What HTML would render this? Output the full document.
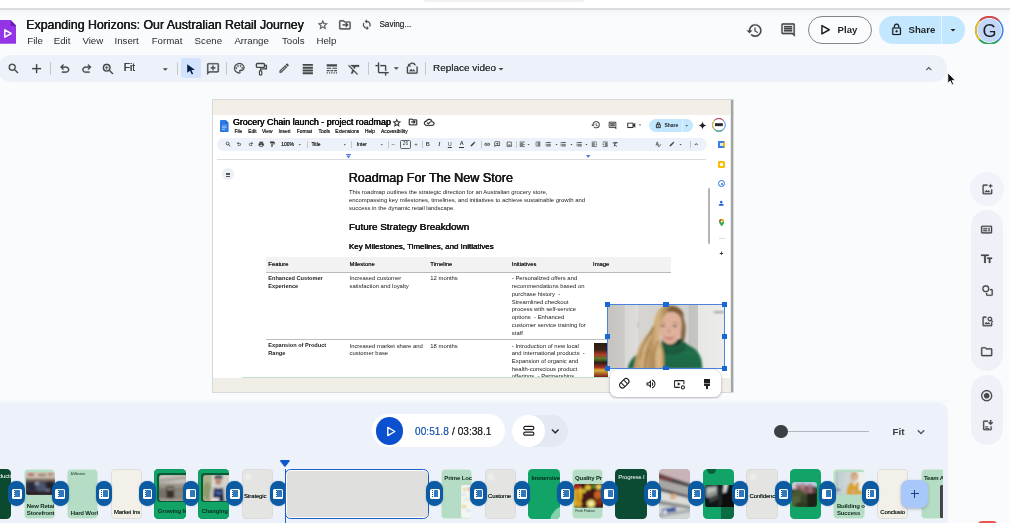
<!DOCTYPE html>
<html lang="en"><head><meta charset="utf-8"><title>Expanding Horizons: Our Australian Retail Journey</title>
<style>
html,body{margin:0;padding:0;}
body{width:1010px;height:523px;overflow:hidden;position:relative;background:#f9fbfd;font-family:"Liberation Sans",sans-serif;}
.t{position:absolute;white-space:nowrap;}
div,svg,span{box-sizing:border-box;}
#w{position:absolute;left:0;top:0;width:1010px;height:523px;will-change:transform;}
</style></head><body><div id="w">
<div style="position:absolute;left:0.00px;top:0.00px;width:1010.00px;height:8.00px;background:#fff;"></div>
<div style="position:absolute;left:423.00px;top:-6.00px;width:162.00px;height:8.00px;background:#f2f2f2;border-radius:4px;"></div>
<div style="position:absolute;left:0.00px;top:8.00px;width:1010.00px;height:1.50px;background:#dcdcdc;"></div>
<div style="position:absolute;left:0.00px;top:9.50px;width:1010.00px;height:6.00px;background:linear-gradient(#f3f4f6,#f9fbfd);"></div>
<svg style="position:absolute;left:-0.500px;top:20.200px" width="16.600" height="23.800" viewBox="0 0 16.600 23.800"><path d="M0 0h10.600l6 6v15.800a2 2 0 0 1-2 2H0z" fill="#9334e6"/><path d="M10.600 0l6 6h-5a1 1 0 0 1-1-1z" fill="#6a1bb8"/><path d="M4.800 9.800v7.400l6.300-3.700z" fill="none" stroke="#fff" stroke-width="1.500" stroke-linejoin="round"/></svg>
<span class="t" style="left:26.30px;top:19.35px;font-size:12.34px;line-height:12.34px;font-weight:400;color:#1f1f1f;text-shadow:0.2px 0 0 #1f1f1f,-0.2px 0 0 #1f1f1f;">Expanding Horizons: Our Australian Retail Journey</span>
<span class="t" style="left:27.30px;top:35.99px;font-size:9.7px;line-height:9.7px;font-weight:400;color:#2d2d2d;">File</span>
<span class="t" style="left:53.70px;top:35.99px;font-size:9.7px;line-height:9.7px;font-weight:400;color:#2d2d2d;">Edit</span>
<span class="t" style="left:82.40px;top:35.99px;font-size:9.7px;line-height:9.7px;font-weight:400;color:#2d2d2d;">View</span>
<span class="t" style="left:114.50px;top:35.99px;font-size:9.7px;line-height:9.7px;font-weight:400;color:#2d2d2d;">Insert</span>
<span class="t" style="left:151.70px;top:35.99px;font-size:9.7px;line-height:9.7px;font-weight:400;color:#2d2d2d;">Format</span>
<span class="t" style="left:194.60px;top:35.99px;font-size:9.7px;line-height:9.7px;font-weight:400;color:#2d2d2d;">Scene</span>
<span class="t" style="left:234.40px;top:35.99px;font-size:9.7px;line-height:9.7px;font-weight:400;color:#2d2d2d;">Arrange</span>
<span class="t" style="left:282.00px;top:35.99px;font-size:9.7px;line-height:9.7px;font-weight:400;color:#2d2d2d;">Tools</span>
<span class="t" style="left:316.40px;top:35.99px;font-size:9.7px;line-height:9.7px;font-weight:400;color:#2d2d2d;">Help</span>
<svg style="position:absolute;left:317.20px;top:19.10px;color:#444746;overflow:visible;" width="11.6" height="11.6" viewBox="0 0 24 24" fill="currentColor" stroke="currentColor" stroke-width="0.5" stroke-linejoin="round"><path d="M22 9.240l-7.190-.620L12 2 9.190 8.630 2 9.240l5.460 4.730L5.820 21 12 17.270 18.180 21l-1.630-7.030L22 9.240zM12 15.400l-3.760 2.270 1-4.280-3.320-2.880 4.380-.380L12 6.100l1.710 4.040 4.380.380-3.320 2.880 1 4.280L12 15.400z"/></svg>
<svg style="position:absolute;left:338.20px;top:17.90px;color:#444746;overflow:visible;" width="13.8" height="13.8" viewBox="0 0 24 24" fill="currentColor" stroke="currentColor" stroke-width="0.4" stroke-linejoin="round"><path d="M20 6h-8l-2-2H4c-1.100 0-2 .9-2 2v12c0 1.100.9 2 2 2h16c1.100 0 2-.9 2-2V8c0-1.100-.9-2-2-2zm0 12H4V6h5.170l2 2H20v10zm-7.160-3.590L14.250 16l4-4-4-4-1.410 1.410L14.420 11H8v2h6.420l-1.580 1.410z"/></svg>
<svg style="position:absolute;left:361.25px;top:19.25px;color:#444746;overflow:visible;" width="11.5" height="11.5" viewBox="0 0 24 24" fill="currentColor" stroke="currentColor" stroke-width="0.5" stroke-linejoin="round"><path d="M12 4V1L8 5l4 4V6c3.310 0 6 2.690 6 6 0 1.010-.250 1.970-.7 2.800l1.460 1.460A7.930 7.930 0 0 0 20 12c0-4.420-3.580-8-8-8zm0 14c-3.310 0-6-2.690-6-6 0-1.010.250-1.970.7-2.800L5.240 7.740A7.930 7.930 0 0 0 4 12c0 4.420 3.580 8 8 8v3l4-4-4-4v3z"/></svg>
<span class="t" style="left:379.40px;top:20.96px;font-size:8.2px;line-height:8.2px;font-weight:400;color:#3a3c3b;text-shadow:0 0 .3px #3a3c3b;">Saving...</span>
<svg style="position:absolute;left:745.50px;top:21.50px;color:#444746;overflow:visible;" width="17" height="17" viewBox="0 0 24 24" fill="currentColor" stroke="currentColor" stroke-width="0.3" stroke-linejoin="round"><path d="M13 3a9 9 0 0 0-9 9H1l3.890 3.890.070.140L9 12H6c0-3.870 3.130-7 7-7s7 3.130 7 7-3.130 7-7 7c-1.930 0-3.680-.790-4.940-2.060l-1.420 1.420A8.954 8.954 0 0 0 13 21a9 9 0 0 0 0-18zm-1 5v5l4.280 2.540.720-1.210-3.500-2.080V8H12z"/></svg>
<svg style="position:absolute;left:780.40px;top:22.40px;color:#444746;overflow:visible;" width="16.2" height="16.2" viewBox="0 0 24 24" fill="currentColor" stroke="currentColor" stroke-width="0.3" stroke-linejoin="round"><path d="M21.990 4c0-1.100-.890-2-1.990-2H4c-1.100 0-2 .9-2 2v12c0 1.100.9 2 2 2h14l4 4-.010-18zM20 4v13.170L18.830 16H4V4h16zM6 12h12v2H6zm0-3h12v2H6zm0-3h12v2H6z"/></svg>
<div style="position:absolute;left:807.60px;top:16.00px;width:64.60px;height:28.00px;border:1px solid #80868b;border-radius:14px;background:#fbfcfe;"></div>
<svg style="position:absolute;left:817.95px;top:23.35px;color:#1f1f1f;overflow:visible;" width="13.5" height="13.5" viewBox="0 0 24 24" fill="currentColor"><path d="M7 4.500v15l13-7.500z" fill="none" stroke="currentColor" stroke-width="2.600" stroke-linejoin="round"/></svg>
<span class="t" style="left:837.60px;top:25.47px;font-size:9.6px;line-height:9.6px;font-weight:700;color:#1f1f1f;">Play</span>
<div style="position:absolute;left:878.90px;top:16.00px;width:86.00px;height:28.00px;border-radius:14px;background:#c2e7ff;"></div>
<div style="position:absolute;left:941.00px;top:16.00px;width:1.00px;height:28.00px;background:#e4f3ff;"></div>
<svg style="position:absolute;left:889.90px;top:23.00px;color:#1f1f1f;overflow:visible;" width="13.2" height="13.2" viewBox="0 0 24 24" fill="currentColor" stroke="currentColor" stroke-width="0.3" stroke-linejoin="round"><path d="M18 8h-1V6c0-2.760-2.240-5-5-5S7 3.240 7 6v2H6c-1.100 0-2 .9-2 2v10c0 1.100.9 2 2 2h12c1.100 0 2-.9 2-2V10c0-1.100-.9-2-2-2zM9 6c0-1.660 1.340-3 3-3s3 1.340 3 3v2H9V6zm9 14H6V10h12v10zm-6-3c1.100 0 2-.9 2-2s-.9-2-2-2-2 .9-2 2 .9 2 2 2z"/></svg>
<span class="t" style="left:908.60px;top:25.47px;font-size:9.6px;line-height:9.6px;font-weight:700;color:#1f1f1f;">Share</span>
<svg style="position:absolute;left:946.60px;top:24.30px;color:#1f1f1f;overflow:visible;" width="12" height="12" viewBox="0 0 24 24" fill="currentColor"><path d="M7 10l5 5 5-5z"/></svg>
<svg style="position:absolute;left:975.4px;top:15.8px" width="28.600" height="28.600" viewBox="0 0 28 28"><circle cx="14" cy="14" r="13.200" fill="none" stroke="#4285f4" stroke-width="1.600"/><path d="M4.670 4.670A13.200 13.200 0 0 1 23.330 4.670" fill="none" stroke="#ea4335" stroke-width="1.600"/><path d="M4.670 4.670A13.200 13.200 0 0 0 4.670 23.330" fill="none" stroke="#fbbc04" stroke-width="1.600"/><path d="M4.670 23.330A13.200 13.200 0 0 0 23.330 23.330" fill="none" stroke="#34a853" stroke-width="1.600"/><circle cx="14" cy="14" r="11.600" fill="#c3d7f8"/><text x="14.200" y="20.300" text-anchor="middle" font-family="Liberation Sans, sans-serif" font-size="17.600" fill="#1f1f1f">G</text></svg>
<div style="position:absolute;left:-2.00px;top:55.00px;width:949.00px;height:26.50px;background:#edf2fa;border-radius:13px;"></div>
<svg style="position:absolute;left:7.00px;top:62.00px;color:#444746;overflow:visible;" width="13.2" height="13.2" viewBox="0 0 24 24" fill="currentColor" stroke="currentColor" stroke-width="0.6" stroke-linejoin="round"><path d="M15.5 14h-.79l-.28-.27A6.47 6.47 0 0 0 16 9.5 6.5 6.5 0 1 0 9.5 16c1.61 0 3.09-.59 4.23-1.57l.27.28v.79l5 4.99L20.49 19l-4.99-5zm-6 0C7.01 14 5 11.99 5 9.5S7.01 5 9.5 5 14 7.01 14 9.5 11.99 14 9.5 14z"/></svg>
<svg style="position:absolute;left:28.90px;top:60.90px;color:#444746;overflow:visible;" width="15.2" height="15.2" viewBox="0 0 24 24" fill="currentColor" stroke="currentColor" stroke-width="0.3" stroke-linejoin="round"><path d="M19 13h-6v6h-2v-6H5v-2h6V5h2v6h6v2z"/></svg>
<div style="position:absolute;left:50.30px;top:62.00px;width:1.00px;height:13.00px;background:#c7c7c7;"></div>
<svg style="position:absolute;left:57.75px;top:62.25px;color:#444746;overflow:visible;" width="13.5" height="13.5" viewBox="0 0 24 24" fill="currentColor" stroke="currentColor" stroke-width="0.5" stroke-linejoin="round"><path d="M7 19v-2h7.1q1.575 0 2.737-1Q18 15 18 13.5T16.837 11Q15.675 10 14.1 10H7.8l2.6 2.6L9 14 4 9l5-5 1.4 1.4L7.8 8h6.3q2.425 0 4.163 1.575Q20 11.15 20 13.5q0 2.35-1.737 3.925Q16.525 19 14.1 19Z"/></svg>
<svg style="position:absolute;left:79.75px;top:62.25px;color:#444746;overflow:visible;" width="13.5" height="13.5" viewBox="0 0 24 24" fill="currentColor" stroke="currentColor" stroke-width="0.5" stroke-linejoin="round"><path d="M9.9 19q-2.425 0-4.163-1.575Q4 15.85 4 13.5q0-2.35 1.737-3.925Q7.475 8 9.9 8h6.3l-2.6-2.6L15 4l5 5-5 5-1.4-1.4 2.6-2.6H9.9q-1.575 0-2.737 1Q6 12 6 13.5T7.163 16q1.162 1 2.737 1H17v2Z"/></svg>
<svg style="position:absolute;left:101.10px;top:61.50px;color:#444746;overflow:visible;" width="14.4" height="14.4" viewBox="0 0 24 24" fill="currentColor" stroke="currentColor" stroke-width="0.5" stroke-linejoin="round"><path d="M15.5 14h-.79l-.28-.27A6.47 6.47 0 0 0 16 9.5 6.5 6.5 0 1 0 9.5 16c1.61 0 3.09-.59 4.23-1.57l.27.28v.79l5 4.99L20.49 19l-4.99-5zm-6 0C7.01 14 5 11.99 5 9.5S7.01 5 9.5 5 14 7.01 14 9.5 11.99 14 9.5 14zm.5-7H9v2H7v1h2v2h1v-2h2V9h-2z"/></svg>
<span class="t" style="left:123.80px;top:63.18px;font-size:10.3px;line-height:10.3px;font-weight:400;color:#3a3c3b;text-shadow:0 0 .5px #3a3c3b;">Fit</span>
<svg style="position:absolute;left:158.75px;top:62.55px;color:#444746;overflow:visible;" width="12.5" height="12.5" viewBox="0 0 24 24" fill="currentColor"><path d="M7 10l5 5 5-5z"/></svg>
<div style="position:absolute;left:176.90px;top:62.00px;width:1.00px;height:13.00px;background:#c7c7c7;"></div>
<div style="position:absolute;left:180.80px;top:57.50px;width:20.40px;height:20.50px;background:#d3e3fd;border-radius:3px;"></div>
<svg style="position:absolute;left:184.90px;top:63.10px;color:#041e49;overflow:visible;" width="11.8" height="11.8" viewBox="0 0 24 24" fill="currentColor"><path d="M4.500 2.500l15.500 11.300-7 .7 3.700 7.400-2.900 1.400-3.700-7.500-5.600 4.200z"/></svg>
<svg style="position:absolute;left:206.00px;top:61.80px;color:#444746;overflow:visible;" width="14" height="14" viewBox="0 0 24 24" fill="currentColor" stroke="currentColor" stroke-width="0.4" stroke-linejoin="round"><path d="M20 2H4c-1.100 0-2 .9-2 2v18l4-4h14c1.100 0 2-.9 2-2V4c0-1.100-.9-2-2-2zm0 14H5.170L4 17.170V4h16v12zM11 14h2v-3h3V9h-3V6h-2v3H8v2h3z"/></svg>
<div style="position:absolute;left:226.00px;top:62.00px;width:1.00px;height:13.00px;background:#c7c7c7;"></div>
<svg style="position:absolute;left:233.00px;top:62.00px;color:#444746;overflow:visible;" width="12.6" height="12.6" viewBox="0 0 24 24" fill="currentColor" stroke="currentColor" stroke-width="0.4" stroke-linejoin="round"><path d="M12 22C6.490 22 2 17.510 2 12S6.490 2 12 2s10 4.040 10 9c0 3.310-2.690 6-6 6h-1.770c-.280 0-.5.220-.5.5 0 .120.050.230.130.330.410.470.640 1.060.640 1.670A2.500 2.500 0 0 1 12 22zm0-18c-4.410 0-8 3.590-8 8s3.590 8 8 8c.280 0 .5-.220.5-.5a.540.540 0 0 0-.140-.350c-.410-.460-.630-1.050-.630-1.650a2.500 2.500 0 0 1 2.500-2.500H16c2.210 0 4-1.790 4-4 0-3.860-3.590-7-8-7z"/><circle cx="6.500" cy="11.500" r="1.500"/><circle cx="9.500" cy="7.500" r="1.500"/><circle cx="14.500" cy="7.500" r="1.500"/><circle cx="17.500" cy="11.500" r="1.500"/></svg>
<svg style="position:absolute;left:254.00px;top:61.70px;color:#444746;overflow:visible;" width="14.4" height="14.4" viewBox="0 0 24 24" fill="currentColor"><rect x="4" y="2.500" width="13.500" height="6.500" rx="1.500" fill="none" stroke="currentColor" stroke-width="2.300"/><path d="M17.500 5.700h3.200v5.800H11v3" fill="none" stroke="currentColor" stroke-width="2.200"/><rect x="9" y="14.500" width="4" height="7.500" rx="1.800" fill="none" stroke="currentColor" stroke-width="2"/></svg>
<svg style="position:absolute;left:278.25px;top:61.75px;color:#444746;overflow:visible;" width="12.3" height="12.3" viewBox="0 0 24 24" fill="currentColor" stroke="currentColor" stroke-width="0.4" stroke-linejoin="round"><path d="M3 17.250V21h3.750L17.810 9.940l-3.750-3.750L3 17.250zM5.920 19H5v-.920l9.060-9.060.920.920L5.920 19zM20.710 5.630l-2.340-2.340a1 1 0 0 0-1.410 0l-1.830 1.830 3.750 3.750 1.830-1.830a1 1 0 0 0 0-1.410z"/></svg>
<svg style="position:absolute;left:301.30px;top:61.80px;color:#444746;overflow:visible;" width="13.6" height="13.6" viewBox="0 0 24 24" fill="currentColor"><path d="M3 3.500h18v3.300H3zM3 8.400h18v3.300H3zM3 13.300h18v3.300H3zM3 18.200h18v3.300H3z"/></svg>
<svg style="position:absolute;left:324.65px;top:61.65px;color:#444746;overflow:visible;" width="13.7" height="13.7" viewBox="0 0 24 24" fill="currentColor"><path d="M3 16h5v-2H3v2zm6.500 0h5v-2h-5v2zm6.500 0h5v-2h-5v2zM3 20h2v-2H3v2zm4 0h2v-2H7v2zm4 0h2v-2h-2v2zm4 0h2v-2h-2v2zm4 0h2v-2h-2v2zM3 12h8v-2H3v2zm10 0h8v-2h-8v2zM3 4v4h18V4H3z"/></svg>
<svg style="position:absolute;left:347.05px;top:61.55px;color:#444746;overflow:visible;" width="14.5" height="14.5" viewBox="0 0 24 24" fill="currentColor" stroke="currentColor" stroke-width="0.4" stroke-linejoin="round"><path d="M3.270 5L2 6.270l6.970 6.970L6.500 19h3l1.570-3.660L16.730 21 18 19.730 3.550 5.270 3.270 5zM6 5v.180L8.820 8h2.400l-.720 1.680 2.100 2.100L14.210 8H20V5H6z"/></svg>
<div style="position:absolute;left:367.70px;top:62.00px;width:1.00px;height:13.00px;background:#c7c7c7;"></div>
<svg style="position:absolute;left:374.90px;top:61.60px;color:#444746;overflow:visible;" width="14.2" height="14.2" viewBox="0 0 24 24" fill="currentColor" stroke="currentColor" stroke-width="0.3" stroke-linejoin="round"><path d="M17 15h2V7c0-1.100-.9-2-2-2H9v2h8v8zM7 17V1H5v4H1v2h4v10c0 1.100.9 2 2 2h10v4h2v-4h4v-2H7z"/></svg>
<svg style="position:absolute;left:390.15px;top:62.35px;color:#444746;overflow:visible;" width="12.5" height="12.5" viewBox="0 0 24 24" fill="currentColor"><path d="M7 10l5 5 5-5z"/></svg>
<svg style="position:absolute;left:404.95px;top:61.05px;color:#444746;overflow:visible;" width="14.5" height="14.5" viewBox="0 0 24 24" fill="currentColor" stroke="currentColor" stroke-width="0.3" stroke-linejoin="round"><path d="M5 9H3v10a2 2 0 0 0 2 2h14a2 2 0 0 0 2-2V9h-2v10H5V9z"/><path d="M7 17l3-4 2.200 2.700 1.800-2.200 3 3.500z"/><path d="M12 2.500a6 6 0 0 0-5.300 3.200L5 4v5h5L8.100 7.100A4 4 0 0 1 12 4.500c1.700 0 3.100 1 3.700 2.500h2.100A6 6 0 0 0 12 2.500z"/></svg>
<div style="position:absolute;left:425.20px;top:62.00px;width:1.00px;height:13.00px;background:#c7c7c7;"></div>
<span class="t" style="left:433.00px;top:63.28px;font-size:9.95px;line-height:9.95px;font-weight:400;color:#333638;text-shadow:0 0 .5px #333638;">Replace video</span>
<svg style="position:absolute;left:494.70px;top:62.80px;color:#444746;overflow:visible;" width="12" height="12" viewBox="0 0 24 24" fill="currentColor"><path d="M7 10l5 5 5-5z"/></svg>
<svg style="position:absolute;left:923.05px;top:62.85px;color:#444746;overflow:visible;" width="11.5" height="11.5" viewBox="0 0 24 24" fill="currentColor"><path d="M12 8l-6 6 1.410 1.410L12 10.830l4.590 4.580L18 14z"/></svg>
<svg style="position:absolute;left:947px;top:71.500px" width="9" height="14" viewBox="0 0 9 14"><path d="M0.800 0.800v10.500l2.500-2.300 1.700 4 1.700-.7-1.700-3.900h3.300z" fill="#111" stroke="#fff" stroke-width=".8"/></svg>
<div style="position:absolute;left:212.50px;top:100.00px;width:520.50px;height:292.00px;background:#fff;box-shadow:0 0 0 .9px #d3d4d6;"></div>
<div style="position:absolute;left:212.50px;top:100.00px;width:520.50px;height:14.70px;background:#f3efe8;"></div>
<div style="position:absolute;left:212.50px;top:377.70px;width:520.50px;height:14.30px;background:#f1eee8;"></div>
<div style="position:absolute;left:241.60px;top:377.00px;width:432.00px;height:1.00px;background:#bfe0cd;"></div>
<div style="position:absolute;left:731.30px;top:100.00px;width:1.90px;height:292.00px;background:#a4a4a4;"></div>
<div style="position:absolute;left:730.30px;top:100.00px;width:1.00px;height:292.00px;background:#e9e9e9;"></div>
<svg style="position:absolute;left:220.300px;top:120px" width="8.600" height="12.400" viewBox="0 0 8.600 12.400"><path d="M0 1a1 1 0 0 1 1-1h4.600l3 3v8.400a1 1 0 0 1-1 1H1a1 1 0 0 1-1-1z" fill="#2b79e4"/><path d="M5.600 0l3 3h-2.400a.6.600 0 0 1-.6-.6z" fill="#1a5dc0"/><path d="M2 6h4.600M2 7.700h4.600M2 9.400h3.200" stroke="#cfe0fb" stroke-width=".75"/></svg>
<span class="t" style="left:233.00px;top:118.07px;font-size:8.9px;line-height:8.9px;font-weight:400;color:#111;text-shadow:0.22px 0 0 #111,-0.22px 0 0 #111;">Grocery Chain launch - project roadmap</span>
<svg style="position:absolute;left:392.20px;top:117.50px;color:#222;overflow:visible;" width="9.6" height="9.6" viewBox="0 0 24 24" fill="currentColor" stroke="currentColor" stroke-width="0.8" stroke-linejoin="round"><path d="M22 9.240l-7.190-.620L12 2 9.190 8.630 2 9.240l5.460 4.730L5.820 21 12 17.270 18.180 21l-1.630-7.030L22 9.240zM12 15.400l-3.760 2.270 1-4.280-3.320-2.880 4.380-.380L12 6.100l1.710 4.040 4.380.380-3.320 2.880 1 4.280L12 15.400z"/></svg>
<svg style="position:absolute;left:408.20px;top:117.40px;color:#222;overflow:visible;" width="10" height="10" viewBox="0 0 24 24" fill="currentColor" stroke="currentColor" stroke-width="0.6" stroke-linejoin="round"><path d="M20 6h-8l-2-2H4c-1.100 0-2 .9-2 2v12c0 1.100.9 2 2 2h16c1.100 0 2-.9 2-2V8c0-1.100-.9-2-2-2zm0 12H4V6h5.170l2 2H20v10zm-7.160-3.590L14.250 16l4-4-4-4-1.410 1.410L14.420 11H8v2h6.420l-1.580 1.410z"/></svg>
<svg style="position:absolute;left:424.35px;top:117.15px;color:#222;overflow:visible;" width="10.5" height="10.5" viewBox="0 0 24 24" fill="currentColor" stroke="currentColor" stroke-width="0.6" stroke-linejoin="round"><path d="M19.350 10.040A7.490 7.490 0 0 0 12 4C9.110 4 6.600 5.640 5.350 8.040A5.994 5.994 0 0 0 0 14c0 3.310 2.690 6 6 6h13c2.760 0 5-2.240 5-5 0-2.640-2.050-4.780-4.650-4.960zM19 18H6c-2.210 0-4-1.790-4-4s1.790-4 4-4h.71C7.370 7.690 9.480 6 12 6c3.040 0 5.500 2.460 5.500 5.500v.5H19c1.660 0 3 1.340 3 3s-1.340 3-3 3zm-9-3.820l-2.090-2.090L6.500 13.500 10 17l6.010-6.010-1.410-1.410z"/></svg>
<span class="t" style="left:234.40px;top:129.55px;font-size:4.9px;line-height:4.9px;font-weight:400;color:#222;text-shadow:0 0 .2px #222;">File</span>
<span class="t" style="left:248.30px;top:129.55px;font-size:4.9px;line-height:4.9px;font-weight:400;color:#222;text-shadow:0 0 .2px #222;">Edit</span>
<span class="t" style="left:262.00px;top:129.55px;font-size:4.9px;line-height:4.9px;font-weight:400;color:#222;text-shadow:0 0 .2px #222;">View</span>
<span class="t" style="left:278.50px;top:129.55px;font-size:4.9px;line-height:4.9px;font-weight:400;color:#222;text-shadow:0 0 .2px #222;">Insert</span>
<span class="t" style="left:296.70px;top:129.55px;font-size:4.9px;line-height:4.9px;font-weight:400;color:#222;text-shadow:0 0 .2px #222;">Format</span>
<span class="t" style="left:318.60px;top:129.55px;font-size:4.9px;line-height:4.9px;font-weight:400;color:#222;text-shadow:0 0 .2px #222;">Tools</span>
<span class="t" style="left:335.20px;top:129.55px;font-size:4.9px;line-height:4.9px;font-weight:400;color:#222;text-shadow:0 0 .2px #222;">Extensions</span>
<span class="t" style="left:364.90px;top:129.55px;font-size:4.9px;line-height:4.9px;font-weight:400;color:#222;text-shadow:0 0 .2px #222;">Help</span>
<span class="t" style="left:381.00px;top:129.55px;font-size:4.9px;line-height:4.9px;font-weight:400;color:#222;text-shadow:0 0 .2px #222;">Accessibility</span>
<svg style="position:absolute;left:590.95px;top:120.45px;color:#333;overflow:visible;" width="9.5" height="9.5" viewBox="0 0 24 24" fill="currentColor" stroke="currentColor" stroke-width="0.3" stroke-linejoin="round"><path d="M13 3a9 9 0 0 0-9 9H1l3.890 3.890.070.140L9 12H6c0-3.870 3.130-7 7-7s7 3.130 7 7-3.130 7-7 7c-1.930 0-3.680-.790-4.940-2.060l-1.420 1.420A8.954 8.954 0 0 0 13 21a9 9 0 0 0 0-18zm-1 5v5l4.280 2.540.720-1.210-3.500-2.080V8H12z"/></svg>
<svg style="position:absolute;left:608.00px;top:120.90px;color:#333;overflow:visible;" width="9" height="9" viewBox="0 0 24 24" fill="currentColor" stroke="currentColor" stroke-width="0.3" stroke-linejoin="round"><path d="M21.990 4c0-1.100-.890-2-1.990-2H4c-1.100 0-2 .9-2 2v12c0 1.100.9 2 2 2h14l4 4-.010-18zM20 4v13.170L18.830 16H4V4h16zM6 12h12v2H6zm0-3h12v2H6zm0-3h12v2H6z"/></svg>
<svg style="position:absolute;left:625.75px;top:120.15px;color:#333;overflow:visible;" width="10.5" height="10.5" viewBox="0 0 24 24" fill="currentColor" stroke="currentColor" stroke-width="0.3" stroke-linejoin="round"><path d="M15 8v8H5V8h10m1-2H4c-.55 0-1 .45-1 1v10c0 .55.45 1 1 1h12c.55 0 1-.45 1-1v-3.500l4 4v-11l-4 4V7c0-.55-.45-1-1-1z"/></svg>
<svg style="position:absolute;left:637.30px;top:122.40px;color:#444746;overflow:visible;" width="6" height="6" viewBox="0 0 24 24" fill="currentColor"><path d="M7 10l5 5 5-5z"/></svg>
<div style="position:absolute;left:649.00px;top:118.70px;width:43.50px;height:13.40px;background:#c2e7ff;border-radius:7px;"></div>
<div style="position:absolute;left:682.40px;top:118.70px;width:0.60px;height:13.40px;background:#e4f3ff;"></div>
<svg style="position:absolute;left:654.70px;top:121.80px;color:#1f1f1f;overflow:visible;" width="6.6" height="6.6" viewBox="0 0 24 24" fill="currentColor" stroke="currentColor" stroke-width="1" stroke-linejoin="round"><path d="M18 8h-1V6c0-2.760-2.240-5-5-5S7 3.240 7 6v2H6c-1.100 0-2 .9-2 2v10c0 1.100.9 2 2 2h12c1.100 0 2-.9 2-2V10c0-1.100-.9-2-2-2zM9 6c0-1.660 1.340-3 3-3s3 1.340 3 3v2H9V6zm9 14H6V10h12v10zm-6-3c1.100 0 2-.9 2-2s-.9-2-2-2-2 .9-2 2 .9 2 2 2z"/></svg>
<span class="t" style="left:664.40px;top:122.87px;font-size:5px;line-height:5px;font-weight:700;color:#1f1f1f;">Share</span>
<svg style="position:absolute;left:684.25px;top:122.65px;color:#1f1f1f;overflow:visible;" width="5.5" height="5.5" viewBox="0 0 24 24" fill="currentColor"><path d="M7 10l5 5 5-5z"/></svg>
<svg style="position:absolute;left:697.80px;top:120.80px;color:#1f1f1f;overflow:visible;" width="9" height="9" viewBox="0 0 24 24" fill="currentColor"><path d="M12 1.500c.6 5.800 4.700 9.900 10.500 10.500-5.800.6-9.900 4.700-10.500 10.500C11.400 16.700 7.300 12.600 1.500 12 7.300 11.400 11.400 7.300 12 1.500z"/></svg>
<svg style="position:absolute;left:711.800px;top:118.300px" width="13.800" height="13.800" viewBox="0 0 28 28"><circle cx="14" cy="14" r="13" fill="#fff" stroke="#4285f4" stroke-width="2"/><path d="M4.800 4.800A13 13 0 0 1 23.200 4.800" fill="none" stroke="#ea4335" stroke-width="2"/><path d="M4.800 4.800A13 13 0 0 0 4.800 23.200" fill="none" stroke="#fbbc04" stroke-width="2"/><path d="M4.800 23.200A13 13 0 0 0 23.200 23.200" fill="none" stroke="#34a853" stroke-width="2"/><rect x="6" y="10.500" width="16" height="6" fill="#2b2b2b"/></svg>
<div style="position:absolute;left:217.00px;top:137.50px;width:489.60px;height:13.50px;background:#edf2fa;border-radius:6.700px;"></div>
<svg style="position:absolute;left:225.25px;top:141.05px;color:#3a3c3b;overflow:visible;" width="6.5" height="6.5" viewBox="0 0 24 24" fill="currentColor" stroke="currentColor" stroke-width="0.5" stroke-linejoin="round"><path d="M15.5 14h-.79l-.28-.27A6.47 6.47 0 0 0 16 9.5 6.5 6.5 0 1 0 9.5 16c1.61 0 3.09-.59 4.23-1.57l.27.28v.79l5 4.99L20.49 19l-4.99-5zm-6 0C7.01 14 5 11.99 5 9.5S7.01 5 9.5 5 14 7.01 14 9.5 11.99 14 9.5 14z"/></svg>
<svg style="position:absolute;left:236.00px;top:141.30px;color:#3a3c3b;overflow:visible;" width="6" height="6" viewBox="0 0 24 24" fill="currentColor" stroke="currentColor" stroke-width="0.5" stroke-linejoin="round"><path d="M7 19v-2h7.1q1.575 0 2.737-1Q18 15 18 13.5T16.837 11Q15.675 10 14.1 10H7.8l2.6 2.6L9 14 4 9l5-5 1.4 1.4L7.8 8h6.3q2.425 0 4.163 1.575Q20 11.15 20 13.5q0 2.35-1.737 3.925Q16.525 19 14.1 19Z"/></svg>
<svg style="position:absolute;left:247.50px;top:141.30px;color:#3a3c3b;overflow:visible;" width="6" height="6" viewBox="0 0 24 24" fill="currentColor" stroke="currentColor" stroke-width="0.5" stroke-linejoin="round"><path d="M9.9 19q-2.425 0-4.163-1.575Q4 15.85 4 13.5q0-2.35 1.737-3.925Q7.475 8 9.9 8h6.3l-2.6-2.6L15 4l5 5-5 5-1.4-1.4 2.6-2.6H9.9q-1.575 0-2.737 1Q6 12 6 13.5T7.163 16q1.162 1 2.737 1H17v2Z"/></svg>
<svg style="position:absolute;left:257.75px;top:141.05px;color:#3a3c3b;overflow:visible;" width="6.5" height="6.5" viewBox="0 0 24 24" fill="currentColor" stroke="currentColor" stroke-width="0.5" stroke-linejoin="round"><path d="M19 8H5c-1.660 0-3 1.340-3 3v6h4v4h12v-4h4v-6c0-1.660-1.340-3-3-3zm-3 11H8v-5h8v5zm3-7c-.55 0-1-.45-1-1s.45-1 1-1 1 .45 1 1-.45 1-1 1zm-1-9H6v4h12V3z"/></svg>
<svg style="position:absolute;left:268.55px;top:141.05px;color:#3a3c3b;overflow:visible;" width="6.5" height="6.5" viewBox="0 0 24 24" fill="currentColor" stroke="currentColor" stroke-width="0.5" stroke-linejoin="round"><path d="M18 4V3c0-.55-.45-1-1-1H5c-.55 0-1 .45-1 1v4c0 .55.45 1 1 1h12c.55 0 1-.45 1-1V6h1v4H9v11c0 .55.45 1 1 1h2c.55 0 1-.45 1-1v-9h8V4h-3z"/></svg>
<span class="t" style="left:281.20px;top:141.97px;font-size:5px;line-height:5px;font-weight:400;color:#222;text-shadow:0 0 .2px #222;">100%</span>
<svg style="position:absolute;left:297.25px;top:141.55px;color:#3a3c3b;overflow:visible;" width="5.5" height="5.5" viewBox="0 0 24 24" fill="currentColor"><path d="M7 10l5 5 5-5z"/></svg>
<div style="position:absolute;left:306.60px;top:141.00px;width:0.60px;height:7.00px;background:#c7c7c7;"></div>
<span class="t" style="left:311.40px;top:141.97px;font-size:5px;line-height:5px;font-weight:400;color:#222;text-shadow:0 0 .2px #222;">Title</span>
<svg style="position:absolute;left:341.85px;top:141.55px;color:#3a3c3b;overflow:visible;" width="5.5" height="5.5" viewBox="0 0 24 24" fill="currentColor"><path d="M7 10l5 5 5-5z"/></svg>
<div style="position:absolute;left:351.30px;top:141.00px;width:0.60px;height:7.00px;background:#c7c7c7;"></div>
<span class="t" style="left:356.90px;top:141.97px;font-size:5px;line-height:5px;font-weight:400;color:#222;text-shadow:0 0 .2px #222;">Inter</span>
<svg style="position:absolute;left:378.75px;top:141.55px;color:#3a3c3b;overflow:visible;" width="5.5" height="5.5" viewBox="0 0 24 24" fill="currentColor"><path d="M7 10l5 5 5-5z"/></svg>
<div style="position:absolute;left:388.00px;top:141.00px;width:0.60px;height:7.00px;background:#c7c7c7;"></div>
<span class="t" style="left:391.50px;top:141.22px;font-size:6px;line-height:6px;font-weight:400;color:#3a3c3b;">&#8722;</span>
<div style="position:absolute;left:400.00px;top:140.20px;width:11.00px;height:8.40px;border:.7px solid #5f6368;border-radius:1.500px;"></div>
<span class="t" style="left:402.80px;top:142.04px;font-size:4.8px;line-height:4.8px;font-weight:400;color:#3a3c3b;">26</span>
<span class="t" style="left:414.30px;top:141.32px;font-size:6px;line-height:6px;font-weight:400;color:#3a3c3b;">+</span>
<div style="position:absolute;left:421.70px;top:141.00px;width:0.60px;height:7.00px;background:#c7c7c7;"></div>
<span class="t" style="left:425.80px;top:141.64px;font-size:5.5px;line-height:5.5px;font-weight:700;color:#3a3c3b;">B</span>
<span class="t" style="left:438.20px;top:141.64px;font-size:5.5px;line-height:5.5px;font-weight:700;color:#3a3c3b;font-style:italic;font-family:Liberation Serif,serif;">I</span>
<span class="t" style="left:447.80px;top:141.64px;font-size:5.5px;line-height:5.5px;font-weight:400;color:#3a3c3b;text-decoration:underline;">U</span>
<span class="t" style="left:459.80px;top:141.34px;font-size:5.5px;line-height:5.5px;font-weight:700;color:#3a3c3b;">A</span>
<div style="position:absolute;left:459.30px;top:147.20px;width:4.80px;height:0.90px;background:#333;"></div>
<svg style="position:absolute;left:470.00px;top:141.30px;color:#3a3c3b;overflow:visible;" width="6" height="6" viewBox="0 0 24 24" fill="currentColor" stroke="currentColor" stroke-width="0.5" stroke-linejoin="round"><path d="M3 17.250V21h3.750L17.810 9.940l-3.750-3.750L3 17.250zM20.710 7.040a1 1 0 0 0 0-1.410l-2.340-2.340a1 1 0 0 0-1.410 0l-1.830 1.830 3.750 3.750 1.830-1.830z"/></svg>
<div style="position:absolute;left:480.70px;top:141.00px;width:0.60px;height:7.00px;background:#c7c7c7;"></div>
<svg style="position:absolute;left:484.15px;top:141.05px;color:#3a3c3b;overflow:visible;" width="6.5" height="6.5" viewBox="0 0 24 24" fill="currentColor" stroke="currentColor" stroke-width="0.5" stroke-linejoin="round"><path d="M3.900 12c0-1.710 1.390-3.100 3.100-3.100h4V7H7c-2.760 0-5 2.240-5 5s2.240 5 5 5h4v-1.900H7c-1.710 0-3.100-1.390-3.100-3.100zM8 13h8v-2H8v2zm9-6h-4v1.900h4c1.710 0 3.100 1.390 3.100 3.100s-1.390 3.100-3.100 3.100h-4V17h4c2.760 0 5-2.240 5-5s-2.240-5-5-5z"/></svg>
<svg style="position:absolute;left:494.25px;top:141.05px;color:#3a3c3b;overflow:visible;" width="6.5" height="6.5" viewBox="0 0 24 24" fill="currentColor" stroke="currentColor" stroke-width="0.5" stroke-linejoin="round"><path d="M20 2H4c-1.100 0-2 .9-2 2v18l4-4h14c1.100 0 2-.9 2-2V4c0-1.100-.9-2-2-2zm0 14H5.170L4 17.170V4h16v12zM11 14h2v-3h3V9h-3V6h-2v3H8v2h3z"/></svg>
<svg style="position:absolute;left:505.55px;top:141.05px;color:#3a3c3b;overflow:visible;" width="6.5" height="6.5" viewBox="0 0 24 24" fill="currentColor" stroke="currentColor" stroke-width="0.5" stroke-linejoin="round"><path d="M19 5v14H5V5h14m0-2H5c-1.100 0-2 .9-2 2v14c0 1.100.9 2 2 2h14c1.100 0 2-.9 2-2V5c0-1.100-.9-2-2-2zm-4.860 8.860l-3 3.870L9 13.140 6 17h12l-3.860-5.140z"/></svg>
<div style="position:absolute;left:516.00px;top:141.00px;width:0.60px;height:7.00px;background:#c7c7c7;"></div>
<svg style="position:absolute;left:518.75px;top:141.05px;color:#3a3c3b;overflow:visible;" width="6.5" height="6.5" viewBox="0 0 24 24" fill="currentColor" stroke="currentColor" stroke-width="0.5" stroke-linejoin="round"><path d="M15 15H3v2h12v-2zm0-8H3v2h12V7zM3 13h18v-2H3v2zm0 8h18v-2H3v2zM3 3v2h18V3H3z"/></svg>
<svg style="position:absolute;left:526.30px;top:141.80px;color:#3a3c3b;overflow:visible;" width="5" height="5" viewBox="0 0 24 24" fill="currentColor"><path d="M7 10l5 5 5-5z"/></svg>
<svg style="position:absolute;left:534.60px;top:141.30px;color:#3a3c3b;overflow:visible;" width="6" height="6" viewBox="0 0 24 24" fill="currentColor" stroke="currentColor" stroke-width="0.5" stroke-linejoin="round"><path d="M3 21h18v-2H3v2zM3 8v8l4-4-4-4zm8 9h10v-2H11v2zM3 3v2h18V3H3zm8 6h10V7H11v2zm0 4h10v-2H11v2z"/></svg>
<svg style="position:absolute;left:545.05px;top:141.05px;color:#3a3c3b;overflow:visible;" width="6.5" height="6.5" viewBox="0 0 24 24" fill="currentColor" stroke="currentColor" stroke-width="0.5" stroke-linejoin="round"><path d="M4 10.500c-.83 0-1.500.67-1.500 1.500s.67 1.500 1.500 1.500 1.500-.67 1.500-1.500-.67-1.500-1.500-1.500zm0-6c-.83 0-1.500.67-1.500 1.500S3.170 7.500 4 7.500 5.500 6.830 5.500 6 4.830 4.500 4 4.500zm0 12c-.83 0-1.500.68-1.500 1.500s.68 1.500 1.500 1.500 1.500-.68 1.500-1.500-.67-1.500-1.500-1.500zM7 19h14v-2H7v2zm0-6h14v-2H7v2zm0-8v2h14V5H7z"/></svg>
<svg style="position:absolute;left:553.50px;top:141.80px;color:#3a3c3b;overflow:visible;" width="5" height="5" viewBox="0 0 24 24" fill="currentColor"><path d="M7 10l5 5 5-5z"/></svg>
<svg style="position:absolute;left:560.35px;top:141.05px;color:#3a3c3b;overflow:visible;" width="6.5" height="6.5" viewBox="0 0 24 24" fill="currentColor" stroke="currentColor" stroke-width="0.5" stroke-linejoin="round"><path d="M4 10.500c-.83 0-1.500.67-1.500 1.500s.67 1.500 1.500 1.500 1.500-.67 1.500-1.500-.67-1.500-1.500-1.500zm0-6c-.83 0-1.500.67-1.500 1.500S3.170 7.500 4 7.500 5.500 6.830 5.500 6 4.830 4.500 4 4.500zm0 12c-.83 0-1.500.68-1.500 1.500s.68 1.500 1.500 1.500 1.500-.68 1.500-1.500-.67-1.500-1.500-1.500zM7 19h14v-2H7v2zm0-6h14v-2H7v2zm0-8v2h14V5H7z"/></svg>
<svg style="position:absolute;left:568.50px;top:141.80px;color:#3a3c3b;overflow:visible;" width="5" height="5" viewBox="0 0 24 24" fill="currentColor"><path d="M7 10l5 5 5-5z"/></svg>
<svg style="position:absolute;left:575.55px;top:141.05px;color:#3a3c3b;overflow:visible;" width="6.5" height="6.5" viewBox="0 0 24 24" fill="currentColor" stroke="currentColor" stroke-width="0.5" stroke-linejoin="round"><path d="M4 10.500c-.83 0-1.500.67-1.500 1.500s.67 1.500 1.500 1.500 1.500-.67 1.500-1.500-.67-1.500-1.500-1.500zm0-6c-.83 0-1.500.67-1.500 1.500S3.170 7.500 4 7.500 5.500 6.830 5.500 6 4.830 4.500 4 4.500zm0 12c-.83 0-1.500.68-1.500 1.500s.68 1.500 1.500 1.500 1.500-.68 1.500-1.500-.67-1.500-1.500-1.500zM7 19h14v-2H7v2zm0-6h14v-2H7v2zm0-8v2h14V5H7z"/></svg>
<svg style="position:absolute;left:583.80px;top:141.80px;color:#3a3c3b;overflow:visible;" width="5" height="5" viewBox="0 0 24 24" fill="currentColor"><path d="M7 10l5 5 5-5z"/></svg>
<svg style="position:absolute;left:590.55px;top:141.05px;color:#3a3c3b;overflow:visible;transform:scaleX(-1);" width="6.5" height="6.5" viewBox="0 0 24 24" fill="currentColor" stroke="currentColor" stroke-width="0.5" stroke-linejoin="round"><path d="M3 21h18v-2H3v2zM3 8v8l4-4-4-4zm8 9h10v-2H11v2zM3 3v2h18V3H3zm8 6h10V7H11v2zm0 4h10v-2H11v2z"/></svg>
<svg style="position:absolute;left:602.35px;top:141.05px;color:#3a3c3b;overflow:visible;" width="6.5" height="6.5" viewBox="0 0 24 24" fill="currentColor" stroke="currentColor" stroke-width="0.5" stroke-linejoin="round"><path d="M3 21h18v-2H3v2zM3 8v8l4-4-4-4zm8 9h10v-2H11v2zM3 3v2h18V3H3zm8 6h10V7H11v2zm0 4h10v-2H11v2z"/></svg>
<svg style="position:absolute;left:612.45px;top:141.05px;color:#3a3c3b;overflow:visible;" width="6.5" height="6.5" viewBox="0 0 24 24" fill="currentColor" stroke="currentColor" stroke-width="0.5" stroke-linejoin="round"><path d="M3.270 5L2 6.270l6.970 6.970L6.500 19h3l1.570-3.660L16.730 21 18 19.730 3.550 5.270 3.270 5zM6 5v.180L8.820 8h2.400l-.720 1.680 2.100 2.100L14.210 8H20V5H6z"/></svg>
<svg style="position:absolute;left:655.25px;top:141.05px;color:#3a3c3b;overflow:visible;" width="6.5" height="6.5" viewBox="0 0 24 24" fill="currentColor" stroke="currentColor" stroke-width="0.5" stroke-linejoin="round"><path d="M12.450 16h2.090L9.430 3H7.570L2.460 16h2.090l1.120-3h5.640l1.140 3zm-6.020-5L8.500 5.480 10.570 11H6.430zm15.160.59l-8.090 8.090L9.830 16l-1.410 1.410 5.090 5.090L23 13l-1.410-1.410z"/></svg>
<svg style="position:absolute;left:669.40px;top:141.30px;color:#3a3c3b;overflow:visible;" width="6" height="6" viewBox="0 0 24 24" fill="currentColor" stroke="currentColor" stroke-width="0.5" stroke-linejoin="round"><path d="M3 17.250V21h3.750L17.810 9.940l-3.750-3.750L3 17.250zM20.710 7.040a1 1 0 0 0 0-1.410l-2.340-2.340a1 1 0 0 0-1.410 0l-1.830 1.830 3.750 3.750 1.830-1.830z"/></svg>
<svg style="position:absolute;left:677.50px;top:141.80px;color:#3a3c3b;overflow:visible;" width="5" height="5" viewBox="0 0 24 24" fill="currentColor"><path d="M7 10l5 5 5-5z"/></svg>
<div style="position:absolute;left:689.80px;top:141.00px;width:0.60px;height:7.00px;background:#c7c7c7;"></div>
<svg style="position:absolute;left:693.45px;top:141.05px;color:#3a3c3b;overflow:visible;" width="6.5" height="6.5" viewBox="0 0 24 24" fill="currentColor" stroke="currentColor" stroke-width="0.5" stroke-linejoin="round"><path d="M12 8l-6 6 1.410 1.410L12 10.830l4.590 4.580L18 14z"/></svg>
<div style="position:absolute;left:217.00px;top:159.20px;width:489.00px;height:0.70px;background:#dadce0;"></div>
<svg style="position:absolute;left:345.900px;top:154.300px" width="5" height="4.500" viewBox="0 0 5 4.500"><path d="M0 0h5v1H0zM.3 1.600h4.400L2.500 4.500z" fill="#4a7fe0"/></svg>
<svg style="position:absolute;left:586.400px;top:155.300px" width="4.500" height="3" viewBox="0 0 4.500 3"><path d="M0 0h4.500L2.250 3z" fill="#4a7fe0"/></svg>
<div style="position:absolute;left:222.20px;top:168.20px;width:11.60px;height:11.60px;background:#eceff5;border-radius:50%;"></div>
<div style="position:absolute;left:226.00px;top:172.70px;width:4.00px;height:0.80px;background:#555;"></div>
<div style="position:absolute;left:226.00px;top:174.30px;width:4.00px;height:0.80px;background:#555;"></div>
<div style="position:absolute;left:226.00px;top:175.90px;width:4.00px;height:0.80px;background:#555;"></div>
<div style="position:absolute;left:717.80px;top:141.00px;width:7.40px;height:7.40px;background:#dbe7fd;border:2px solid #3b7de9;border-radius:1.200px;border-right-color:#f2b705;border-bottom-color:#3b7de9;"></div>
<div style="position:absolute;left:718.00px;top:160.80px;width:7.00px;height:7.00px;background:#fbbc04;border-radius:1.200px;"></div>
<div style="position:absolute;left:720.20px;top:163.00px;width:2.60px;height:2.60px;background:#fff;border-radius:.5px;"></div>
<div style="position:absolute;left:718.00px;top:180.30px;width:7.00px;height:7.00px;border:1.500px solid #2a6fdb;border-radius:50%;"></div>
<div style="position:absolute;left:720.50px;top:182.80px;width:2.20px;height:2.20px;background:#2a6fdb;border-radius:50%;"></div>
<svg style="position:absolute;left:718.25px;top:200.05px;color:#1a5fd0;overflow:visible;" width="6.5" height="6.5" viewBox="0 0 24 24" fill="currentColor"><circle cx="12" cy="7.500" r="4.500"/><path d="M3 21v-2.500c0-3 6-4.500 9-4.500s9 1.500 9 4.500V21z"/></svg>
<svg style="position:absolute;left:718.900px;top:219px" width="5.200" height="7.400" viewBox="0 0 12 17"><path d="M6 0a6 6 0 0 0-6 6c0 4.500 6 11 6 11s6-6.500 6-11a6 6 0 0 0-6-6z" fill="#34a853"/><path d="M6 0a6 6 0 0 0-6 6l6 0z" fill="#ea4335" opacity=".9"/><path d="M6 0a6 6 0 0 1 6 6H6z" fill="#fbbc04"/><circle cx="6" cy="6" r="2.200" fill="#fff"/></svg>
<div style="position:absolute;left:718.50px;top:238.00px;width:6.00px;height:0.60px;background:#dadce0;"></div>
<span class="t" style="left:719.60px;top:250.50px;font-size:6.5px;line-height:6.5px;font-weight:700;color:#333;">+</span>
<div style="position:absolute;left:707.80px;top:187.70px;width:2.00px;height:56.00px;background:#b4b4b4;border-radius:1px;"></div>
<span class="t" style="left:348.70px;top:172.43px;font-size:12.6px;line-height:12.6px;font-weight:400;color:#1a1a1a;text-shadow:0.28px 0 0 #1a1a1a,-0.28px 0 0 #1a1a1a;">Roadmap For The New Store</span>
<span class="t" style="left:349.00px;top:190.08px;font-size:5.93px;line-height:5.93px;font-weight:400;color:#1c1c1c;">This roadmap outlines the strategic direction for an Australian grocery store,</span>
<span class="t" style="left:349.00px;top:197.88px;font-size:5.93px;line-height:5.93px;font-weight:400;color:#1c1c1c;">encompassing key milestones, timelines, and initiatives to achieve sustainable growth and</span>
<span class="t" style="left:349.00px;top:205.68px;font-size:5.93px;line-height:5.93px;font-weight:400;color:#1c1c1c;">success in the dynamic retail landscape.</span>
<span class="t" style="left:349.00px;top:222.13px;font-size:9.89px;line-height:9.89px;font-weight:400;color:#1a1a1a;text-shadow:0.25px 0 0 #1a1a1a,-0.25px 0 0 #1a1a1a;">Future Strategy Breakdown</span>
<span class="t" style="left:349.00px;top:243.27px;font-size:7.95px;line-height:7.95px;font-weight:400;color:#1a1a1a;text-shadow:0.2px 0 0 #1a1a1a,-0.2px 0 0 #1a1a1a;">Key Milestones, Timelines, and Initiatives</span>
<div style="position:absolute;left:265.70px;top:256.50px;width:405.60px;height:15.50px;background:#f2f2f2;"></div>
<div style="position:absolute;left:265.70px;top:271.70px;width:405.60px;height:0.90px;background:#b9b9b9;"></div>
<div style="position:absolute;left:265.70px;top:339.20px;width:405.60px;height:0.80px;background:#bdbdbd;"></div>
<span class="t" style="left:268.30px;top:261.51px;font-size:5.9px;line-height:5.9px;font-weight:400;color:#1c1c1c;text-shadow:0 0 .15px #1c1c1c;">Feature</span>
<span class="t" style="left:349.50px;top:261.51px;font-size:5.9px;line-height:5.9px;font-weight:400;color:#1c1c1c;text-shadow:0 0 .15px #1c1c1c;">Milestone</span>
<span class="t" style="left:430.30px;top:261.51px;font-size:5.9px;line-height:5.9px;font-weight:400;color:#1c1c1c;text-shadow:0 0 .15px #1c1c1c;">Timeline</span>
<span class="t" style="left:511.80px;top:261.51px;font-size:5.9px;line-height:5.9px;font-weight:400;color:#1c1c1c;text-shadow:0 0 .15px #1c1c1c;">Initiatives</span>
<span class="t" style="left:593.00px;top:261.51px;font-size:5.9px;line-height:5.9px;font-weight:400;color:#1c1c1c;text-shadow:0 0 .15px #1c1c1c;">Image</span>
<span class="t" style="left:268.30px;top:276.16px;font-size:5.6px;line-height:5.6px;font-weight:700;color:#222;">Enhanced Customer</span>
<span class="t" style="left:268.30px;top:283.91px;font-size:5.6px;line-height:5.6px;font-weight:700;color:#222;">Experience</span>
<span class="t" style="left:349.50px;top:276.41px;font-size:5.9px;line-height:5.9px;font-weight:400;color:#222;">Increased customer</span>
<span class="t" style="left:349.50px;top:284.16px;font-size:5.9px;line-height:5.9px;font-weight:400;color:#222;">satisfaction and loyalty</span>
<span class="t" style="left:430.30px;top:276.41px;font-size:5.9px;line-height:5.9px;font-weight:400;color:#222;">12 months</span>
<span class="t" style="left:511.80px;top:276.41px;font-size:5.9px;line-height:5.9px;font-weight:400;color:#222;">- Personalized offers and</span>
<span class="t" style="left:511.80px;top:284.16px;font-size:5.9px;line-height:5.9px;font-weight:400;color:#222;">recommendations based on</span>
<span class="t" style="left:511.80px;top:291.91px;font-size:5.9px;line-height:5.9px;font-weight:400;color:#222;">purchase history&nbsp; -</span>
<span class="t" style="left:511.80px;top:299.66px;font-size:5.9px;line-height:5.9px;font-weight:400;color:#222;">Streamlined checkout</span>
<span class="t" style="left:511.80px;top:307.41px;font-size:5.9px;line-height:5.9px;font-weight:400;color:#222;">process with self-service</span>
<span class="t" style="left:511.80px;top:315.16px;font-size:5.9px;line-height:5.9px;font-weight:400;color:#222;">options&nbsp; - Enhanced</span>
<span class="t" style="left:511.80px;top:322.91px;font-size:5.9px;line-height:5.9px;font-weight:400;color:#222;">customer service training for</span>
<span class="t" style="left:511.80px;top:330.66px;font-size:5.9px;line-height:5.9px;font-weight:400;color:#222;">staff</span>
<span class="t" style="left:268.30px;top:343.26px;font-size:5.6px;line-height:5.6px;font-weight:700;color:#222;">Expansion of Product</span>
<span class="t" style="left:268.30px;top:351.01px;font-size:5.6px;line-height:5.6px;font-weight:700;color:#222;">Range</span>
<span class="t" style="left:349.50px;top:343.51px;font-size:5.9px;line-height:5.9px;font-weight:400;color:#222;">Increased market share and</span>
<span class="t" style="left:349.50px;top:351.26px;font-size:5.9px;line-height:5.9px;font-weight:400;color:#222;">customer base</span>
<span class="t" style="left:430.30px;top:343.51px;font-size:5.9px;line-height:5.9px;font-weight:400;color:#222;">18 months</span>
<span class="t" style="left:511.80px;top:343.51px;font-size:5.9px;line-height:5.9px;font-weight:400;color:#222;">- Introduction of new local</span>
<span class="t" style="left:511.80px;top:351.26px;font-size:5.9px;line-height:5.9px;font-weight:400;color:#222;">and international products&nbsp; -</span>
<span class="t" style="left:511.80px;top:359.01px;font-size:5.9px;line-height:5.9px;font-weight:400;color:#222;">Expansion of organic and</span>
<span class="t" style="left:511.80px;top:366.76px;font-size:5.9px;line-height:5.9px;font-weight:400;color:#222;">health-conscious product</span>
<div style="position:absolute;left:511.800px;top:371.500px;width:100px;height:5.500px;overflow:hidden;"><span class="t" style="left:0;top:2.100px;font-size:5.900px;line-height:5.900px;color:#222;">offerings&nbsp; - Partnerships</span></div>
<div style="position:absolute;left:593.60px;top:343.40px;width:14.50px;height:33.60px;background:linear-gradient(180deg,#2a1a12 0%,#3a2416 20%,#b43a2a 34%,#5a7a2a 46%,#2d1c14 58%,#a8301f 72%,#d8b13a 80%,#7a1d16 100%);"></div>
<svg style="position:absolute;left:608px;top:304.600px" width="116" height="63.800" viewBox="0 0 116 63.800">
<defs>
<linearGradient id="wbg" x1="0" x2="1" y1="0" y2="0"><stop offset="0" stop-color="#c4c3bf"/><stop offset=".14" stop-color="#cccbc7"/><stop offset=".15" stop-color="#d9d8d5"/><stop offset=".24" stop-color="#dcdbd8"/><stop offset=".25" stop-color="#e3e2df"/><stop offset=".26" stop-color="#d6d5d2"/><stop offset=".69" stop-color="#d2d1ce"/><stop offset=".70" stop-color="#c3c2bf"/><stop offset=".775" stop-color="#c6c5c2"/><stop offset=".78" stop-color="#e7e7e5"/><stop offset="1" stop-color="#ececea"/></linearGradient>
<linearGradient id="hair" x1="0" x2="1" y1="0" y2="0"><stop offset="0" stop-color="#b8935f"/><stop offset=".25" stop-color="#d2b07c"/><stop offset=".45" stop-color="#b48d5a"/><stop offset=".65" stop-color="#d6b684"/><stop offset=".85" stop-color="#b18a57"/><stop offset="1" stop-color="#9c7748"/></linearGradient>
<linearGradient id="swt" x1="0" x2="0" y1="0" y2="1"><stop offset="0" stop-color="#1b5f40"/><stop offset=".4" stop-color="#20704b"/><stop offset="1" stop-color="#1d6544"/></linearGradient>
<filter id="bl" x="-10%" y="-10%" width="120%" height="120%"><feGaussianBlur stdDeviation="0.850"/></filter>
</defs>
<rect width="116" height="63.800" fill="url(#wbg)"/>
<g filter="url(#bl)">
<rect x="29.300" y="17.500" width=".9" height="5" fill="#a9a8a4"/>
<rect x="106" y="6.500" width="10" height="1.300" fill="#7d7a75"/>
<!-- sweater body -->
<path d="M19.500 63.800c1.500-6 4-10.500 8.500-13.500l12-5 14-8.500 22 0 6 4.500c6 2.500 9.500 6.500 11.500 14l1 8.500z" fill="url(#swt)"/>
<!-- hair behind right -->
<path d="M70 8c4 2 7 7 7.500 13 .5 6-.3 11-1.500 15l-4 3c1-8 1-17-2-31z" fill="#86663f"/>
<!-- neck shadow -->
<path d="M53.500 34l4 8 14 0 3.500-8z" fill="#143f2b"/>
<ellipse cx="62.500" cy="15.500" rx="13.500" ry="15" fill="#86663f"/>
<!-- face -->
<path d="M51.500 14c1.500-5 6-7.500 10.500-7.500s9.500 2.500 11 7.500c1.200 5 .8 11-1 16-2 5-5.500 9.500-10 9.500s-8-4.500-9.800-9.500c-1.700-5-1.900-11-.7-16z" fill="#dfb19b"/>
<path d="M55.500 30.500c2 1.400 3.800 1.900 6 1.900s4-.5 5.500-1.900c-.8 2.800-2.800 4.300-5.500 4.300s-5-1.500-6-4.300z" fill="#c47a6d"/>
<ellipse cx="54.800" cy="21" rx="2.500" ry="1" fill="#7a6458"/><ellipse cx="66.800" cy="21" rx="2.500" ry="1" fill="#7a6458"/>
<path d="M51.500 18.300c2-1.200 4.500-1.200 6.500-.3M63.800 18c2-1 4.600-.9 6.500.3" stroke="#a88467" stroke-width=".8" fill="none"/>
<path d="M60.800 21.500l-1.600 6.200c1 .8 2.800.8 3.800 0z" fill="#cf9d88"/>
<!-- collar -->
<path d="M52.500 37.500c2.500 3.500 6 5.200 10.500 5.200s9.500-2 12.500-6.500l1.800 8.500c-3.500 3.500-8.500 5-14 5s-9.800-1.700-12.800-5z" fill="#1a5a3d"/>
<path d="M52.500 37.500c2.500 3.500 6 5.200 10.500 5.200s9.500-2 12.500-6.500" stroke="#2a7d55" stroke-width=".9" fill="none"/>
<!-- hair top dark -->
<path d="M49 11c2-7 8.500-10.500 15.500-10 6 .5 10.500 4 11.500 9.500-3.500-3-8-4.200-12.800-3.800-5.500.5-9.700 2-14.200 4.300z" fill="#7d5c39"/>
<!-- long wavy hair -->
<path d="M63 1c-5.500-1.200-12 1.500-14.500 7-2.500 5.500-2.500 10.500-5 15.500-2.500 5-7.500 9-10.500 14.500-3 5.500-5.500 15-7.700 25.800h30.500c.8-5 .5-9.500.2-14-.4-5-2.500-9.500-3.500-14-1.200-5.500-1.300-11 0-16 1.300-5 4-9.500 10.500-18.800z" fill="url(#hair)"/>
<path d="M45.500 22c-2 7-7 11-9.500 17-2 5-3.500 10-4.500 15M50 36c-1.500 6-4 9-4.500 14-.4 4 .5 8 0 13.800M40.500 44c-2 5-3.500 11-4 19.800" stroke="#8f6c40" stroke-width="1.500" fill="none" opacity=".7"/>
<path d="M43 30c-2 6-6 10-7.500 16M52 44c-.5 5 .5 11 0 19M47.500 10c-1 4-1.500 8-2.500 11" stroke="#e8cfa2" stroke-width="1.200" fill="none" opacity=".8"/>
</g>
</svg>
<div style="position:absolute;left:607.30px;top:303.90px;width:117.50px;height:65.20px;border:1.300px solid #4a82dc;"></div>
<div style="position:absolute;left:605.30px;top:301.90px;width:5.20px;height:5.20px;background:#1967d2;"></div>
<div style="position:absolute;left:605.30px;top:333.90px;width:5.20px;height:5.20px;background:#1967d2;"></div>
<div style="position:absolute;left:605.30px;top:366.00px;width:5.20px;height:5.20px;background:#1967d2;"></div>
<div style="position:absolute;left:663.40px;top:301.90px;width:5.20px;height:5.20px;background:#1967d2;"></div>
<div style="position:absolute;left:663.40px;top:366.00px;width:5.20px;height:5.20px;background:#1967d2;"></div>
<div style="position:absolute;left:721.60px;top:301.90px;width:5.20px;height:5.20px;background:#1967d2;"></div>
<div style="position:absolute;left:721.60px;top:333.90px;width:5.20px;height:5.20px;background:#1967d2;"></div>
<div style="position:absolute;left:721.60px;top:366.00px;width:5.20px;height:5.20px;background:#1967d2;"></div>
<div style="position:absolute;left:610.30px;top:370.00px;width:110.50px;height:27.00px;background:#fff;border-radius:6.500px;box-shadow:0 1px 3px rgba(60,64,67,.35),0 0 1px rgba(60,64,67,.3);"></div>
<svg style="position:absolute;left:617.65px;top:377.35px;color:#1f1f1f;overflow:visible;" width="12.5" height="12.5" viewBox="0 0 24 24" fill="currentColor"><g transform="rotate(-45 12 12)"><rect x="1.500" y="6.500" width="21" height="11" rx="5.500" fill="none" stroke="currentColor" stroke-width="2.200"/><path d="M8.500 6.500v11M15.500 6.500v11" stroke="currentColor" stroke-width="2" fill="none"/></g></svg>
<svg style="position:absolute;left:645.30px;top:377.70px;color:#1f1f1f;overflow:visible;" width="12" height="12" viewBox="0 0 24 24" fill="currentColor"><path d="M3 9v6h4l5 5V4L7 9H3zm7-.170v6.340L7.830 13H5v-2h2.830L10 8.830zM16.500 12A4.500 4.500 0 0 0 14 7.970v8.050c1.480-.730 2.500-2.250 2.500-4.020zM14 3.230v2.060c2.890.860 5 3.540 5 6.710s-2.110 5.850-5 6.710v2.060c4.010-.910 7-4.490 7-8.770 0-4.280-2.990-7.860-7-8.770z"/></svg>
<svg style="position:absolute;left:673.05px;top:377.55px;color:#1f1f1f;overflow:visible;" width="12.5" height="12.5" viewBox="0 0 24 24" fill="currentColor"><path d="M20 4H4a2 2 0 0 0-2 2v11a2 2 0 0 0 2 2h9v-2H4V6h16v6h2V6a2 2 0 0 0-2-2z"/><path d="M9 8.200v6.600l5.500-3.300z"/><circle cx="19" cy="18" r="3" fill="none" stroke="currentColor" stroke-width="2"/></svg>
<svg style="position:absolute;left:700.80px;top:377.70px;color:#1f1f1f;overflow:visible;" width="12" height="12" viewBox="0 0 24 24" fill="currentColor"><path d="M6 2h12v9H6z"/><path d="M6 12h12v2.500a1.500 1.500 0 0 1-1.500 1.500H14v4.500a2 2 0 0 1-4 0V16H7.500A1.500 1.500 0 0 1 6 14.500z"/><path d="M8 4h8v4H8z" fill="#fff" opacity=".0"/></svg>
<div style="position:absolute;left:969.50px;top:172.30px;width:34.00px;height:34.00px;background:#f0f3f9;border-radius:17px;"></div>
<div style="position:absolute;left:971.00px;top:210.00px;width:32.00px;height:160.50px;background:#eef1f8;border-radius:16px;"></div>
<div style="position:absolute;left:971.00px;top:375.20px;width:32.00px;height:70.00px;background:#eef1f8;border-radius:16px;"></div>
<svg style="position:absolute;left:980.80px;top:182.80px;color:#444746;overflow:visible;" width="12.8" height="12.8" viewBox="0 0 24 24" fill="currentColor" stroke="currentColor" stroke-width="0.6" stroke-linejoin="round"><path d="M19 12v7H5V5h7V3H5a2 2 0 0 0-2 2v14a2 2 0 0 0 2 2h14a2 2 0 0 0 2-2v-7h-2z"/><path d="M7 17l3-4 2.200 2.700 1.800-2.200 3 3.500z"/><path d="M18 1.500l1.100 2.900L22 5.500l-2.900 1.100L18 9.500l-1.100-2.900L14 5.500l2.900-1.100z"/></svg>
<svg style="position:absolute;left:980.40px;top:222.90px;color:#444746;overflow:visible;" width="13.2" height="13.2" viewBox="0 0 24 24" fill="currentColor" stroke="currentColor" stroke-width="0.5" stroke-linejoin="round"><path d="M20 5H4a2 2 0 0 0-2 2v10a2 2 0 0 0 2 2h16a2 2 0 0 0 2-2V7a2 2 0 0 0-2-2zm0 12H4V7h16v10z"/><path d="M6 9.500h7v2H6zM6 13h7v1.800H6zM15 9.500h3v2h-3zM15 13h3v1.800h-3z"/></svg>
<svg style="position:absolute;left:980.40px;top:252.40px;color:#444746;overflow:visible;" width="13.2" height="13.2" viewBox="0 0 24 24" fill="currentColor" stroke="currentColor" stroke-width="0.3" stroke-linejoin="round"><path d="M2 4.500v3h5.500v12.500h3.200V7.500H16v-3H2zM22 10h-9v2.800h3V20h3v-7.200h3V10z"/></svg>
<svg style="position:absolute;left:980.60px;top:284.40px;color:#444746;overflow:visible;" width="12.8" height="12.8" viewBox="0 0 24 24" fill="currentColor" stroke="currentColor" stroke-width="0.5" stroke-linejoin="round"><path d="M9 2.500a6.500 6.500 0 1 0 0 13 6.500 6.500 0 0 0 0-13zm0 11a4.500 4.500 0 1 1 0-9 4.500 4.500 0 0 1 0 9z"/><path d="M17 9.500V11.500h3v8.500h-8.500v-3H9.500V20a2 2 0 0 0 2 2H20a2 2 0 0 0 2-2v-8.500a2 2 0 0 0-2-2h-3z"/></svg>
<svg style="position:absolute;left:980.80px;top:314.90px;color:#444746;overflow:visible;" width="12.8" height="12.8" viewBox="0 0 24 24" fill="currentColor" stroke="currentColor" stroke-width="0.6" stroke-linejoin="round"><path d="M19 14v5H5V5h5V3H5a2 2 0 0 0-2 2v14a2 2 0 0 0 2 2h14a2 2 0 0 0 2-2v-5h-2z"/><path d="M7 17l3-4 2.200 2.700 1.800-2.200 3 3.500z"/><path d="M20.300 9.900l2.200 2.200-1.300 1.300-2.200-2.200a4.300 4.300 0 1 1 1.300-1.300zM16.700 5a2.500 2.500 0 1 0 0 5 2.500 2.500 0 0 0 0-5z"/></svg>
<svg style="position:absolute;left:980.30px;top:344.80px;color:#444746;overflow:visible;" width="13.4" height="13.4" viewBox="0 0 24 24" fill="currentColor" stroke="currentColor" stroke-width="0.5" stroke-linejoin="round"><path d="M9.170 6l2 2H20v10H4V6h5.170M10 4H4c-1.100 0-1.990.9-1.990 2L2 18c0 1.100.9 2 2 2h16c1.100 0 2-.9 2-2V8c0-1.100-.9-2-2-2h-8l-2-2z"/></svg>
<svg style="position:absolute;left:980.10px;top:388.60px;color:#444746;overflow:visible;" width="13.4" height="13.4" viewBox="0 0 24 24" fill="currentColor" stroke="currentColor" stroke-width="0.3" stroke-linejoin="round"><path d="M12 7c-2.760 0-5 2.240-5 5s2.240 5 5 5 5-2.240 5-5-2.240-5-5-5zm0-5C6.480 2 2 6.480 2 12s4.480 10 10 10 10-4.480 10-10S17.520 2 12 2zm0 18c-4.420 0-8-3.580-8-8s3.580-8 8-8 8 3.580 8 8-3.580 8-8 8z"/></svg>
<svg style="position:absolute;left:980.80px;top:419.30px;color:#444746;overflow:visible;" width="12.8" height="12.8" viewBox="0 0 24 24" fill="currentColor" stroke="currentColor" stroke-width="0.5" stroke-linejoin="round"><path d="M13 3H6a2 2 0 0 0-2 2v14a2 2 0 0 0 2 2h12a2 2 0 0 0 2-2v-5h-2v5H6V5h7V3z"/><path d="M8 14h5v1.600H8zM8 17h7v1.500H8z"/><path d="M17 2h2.200v5.200l1.900-1.900 1.500 1.500-4.500 4.500-4.500-4.500 1.500-1.500 1.900 1.900z"/></svg>
<div style="position:absolute;left:977.60px;top:520.80px;width:19.20px;height:8.00px;background:#e8564b;border-radius:4px;"></div>
<div style="position:absolute;left:-10.00px;top:403.00px;width:957.60px;height:130.00px;background:#edf1f9;border-radius:9px;"></div>
<div style="position:absolute;left:0.00px;top:399.00px;width:948.00px;height:4.00px;background:linear-gradient(#f9fbfd,#f3f6fb);"></div>
<div style="position:absolute;left:372.00px;top:414.30px;width:133.40px;height:33.20px;background:#fff;border-radius:16.600px;"></div>
<div style="position:absolute;left:375.90px;top:417.20px;width:27.60px;height:27.60px;background:#0b50cf;border-radius:50%;"></div>
<svg style="position:absolute;left:383.70px;top:424.60px;color:#fff;overflow:visible;" width="13" height="13" viewBox="0 0 24 24" fill="currentColor"><path d="M7 4.500v15l13-7.500z" fill="none" stroke="currentColor" stroke-width="2.600" stroke-linejoin="round"/></svg>
<span class="t" style="left:415.10px;top:426.55px;font-size:10.1px;line-height:10.1px;font-weight:400;color:#2f63b8;text-shadow:0 0 .4px #2f63b8;">00:51.8</span>
<span class="t" style="left:452.10px;top:426.55px;font-size:10.1px;line-height:10.1px;font-weight:400;color:#2e2e2e;text-shadow:0 0 .2px #2e2e2e;">/ 03:38.1</span>
<div style="position:absolute;left:512.20px;top:414.80px;width:56.00px;height:32.40px;background:#e3e8f2;border-radius:16.200px;"></div>
<div style="position:absolute;left:512.20px;top:414.80px;width:32.40px;height:32.40px;background:#fff;border-radius:50%;"></div>
<svg style="position:absolute;left:521.90px;top:424.30px;color:#1f1f1f;overflow:visible;" width="13.6" height="13.6" viewBox="0 0 24 24" fill="currentColor"><rect x="3" y="4.200" width="18" height="5.600" rx="2.800" fill="none" stroke="currentColor" stroke-width="2.100"/><rect x="3" y="14.200" width="18" height="5.600" rx="2.800" fill="none" stroke="currentColor" stroke-width="2.100"/></svg>
<svg style="position:absolute;left:548.15px;top:423.95px;color:#1f1f1f;overflow:visible;" width="14.5" height="14.5" viewBox="0 0 24 24" fill="currentColor" stroke="currentColor" stroke-width="0.4" stroke-linejoin="round"><path d="M16.590 8.590L12 13.170 7.410 8.590 6 10l6 6 6-6z"/></svg>
<div style="position:absolute;left:780.00px;top:430.90px;width:89.30px;height:1.10px;background:#b3b7bd;"></div>
<div style="position:absolute;left:773.80px;top:424.50px;width:13.80px;height:13.80px;background:#3c4043;border-radius:50%;"></div>
<span class="t" style="left:892.60px;top:427.00px;font-size:9.8px;line-height:9.8px;font-weight:700;color:#3c4043;">Fit</span>
<svg style="position:absolute;left:914.10px;top:424.60px;color:#3c4043;overflow:visible;" width="14" height="14" viewBox="0 0 24 24" fill="currentColor" stroke="currentColor" stroke-width="0.3" stroke-linejoin="round"><path d="M16.590 8.590L12 13.170 7.410 8.590 6 10l6 6 6-6z"/></svg>
<div style="position:absolute;left:0;top:455px;width:942.700px;height:68px;overflow:hidden;">
<svg width="0" height="0" style="position:absolute"><defs><filter id="tb" x="-5%" y="-5%" width="110%" height="110%"><feGaussianBlur stdDeviation=".85"/></filter></defs></svg>
<div style="position:absolute;left:-20.10px;top:14.2px;width:31.4px;height:50px;background:#0c4a30;border-radius:4.500px;overflow:hidden;"><span class="t" style="right:.5px;top:4.300px;font-size:6px;line-height:6px;color:#fff;letter-spacing:-0.150px;">Introducti</span></div>
<div style="position:absolute;left:23.50px;top:14.2px;width:31.4px;height:50px;background:#b5dcc4;border-radius:4.500px;overflow:hidden;box-shadow:inset 0 0 0 .7px rgba(255,255,255,.55);"><svg style="position:absolute;left:2.6px;top:3px;border-radius:2px 0 0 2px;" width="28.8" height="22.8" viewBox="0 0 28.8 22.8"><g filter="url(#tb)"><rect x="-1" y="-1" width="31" height="25" fill="#3a3642" /><rect x="-1" y="-1" width="31" height="8" fill="#cfc4b6" /><rect x="2" y="1.5" width="6" height="2.5" fill="#a8584a" /><rect x="12" y="2" width="8" height="2" fill="#8a6a58" /><rect x="22" y="1" width="5" height="3" fill="#b08a72" /><rect x="-1" y="6.5" width="31" height="3" fill="#7a6a62" /><ellipse cx="6" cy="14" rx="4" ry="4.5" fill="#2a2c3c"/><ellipse cx="15" cy="15" rx="5" ry="5" fill="#4a5670"/><ellipse cx="24" cy="14" rx="4" ry="5" fill="#23222c"/><rect x="9" y="10" width="4" height="3" fill="#8a93a8" /><rect x="19" y="17" width="5" height="3" fill="#6a7288" /><rect x="-1" y="19.5" width="31" height="4" fill="#2a2424" /></g></svg><span class="t" style="left:3.3px;top:33.42px;font-size:6px;line-height:6px;font-weight:700;color:#0f2a1d;letter-spacing:-0.150px;">New Retai</span><span class="t" style="left:3.3px;top:40.72px;font-size:6px;line-height:6px;font-weight:700;color:#0f2a1d;letter-spacing:-0.150px;">Storefront</span></div>
<div style="position:absolute;left:67.10px;top:14.2px;width:31.4px;height:50px;background:#b5dcc4;border-radius:4.500px;overflow:hidden;box-shadow:inset 0 0 0 .7px rgba(255,255,255,.55);"><span class="t" style="left:3.7px;top:4.28px;font-size:3.1px;line-height:3.1px;font-weight:400;color:#24402f;letter-spacing:-0.150px;">A Milestone</span><span class="t" style="left:3.7px;top:40.92px;font-size:6px;line-height:6px;font-weight:700;color:#0f2a1d;letter-spacing:-0.150px;">Hard Worl</span></div>
<div style="position:absolute;left:110.70px;top:14.2px;width:31.4px;height:50px;background:#f2f0e8;border-radius:4.500px;overflow:hidden;box-shadow:inset 0 0 0 .8px #d9dad8;"><span class="t" style="left:3.3px;top:41.01px;font-size:5.9px;line-height:5.9px;font-weight:400;color:#1f2a24;letter-spacing:-0.150px;text-shadow:0 0 .12px #1f2a24;">Market Ins</span></div>
<div style="position:absolute;left:154.30px;top:14.2px;width:31.4px;height:50px;background:#12a467;border-radius:4.500px;overflow:hidden;box-shadow:inset 0 0 0 .8px #0e9a5f;"><div style="position:absolute;left:2.700px;top:3.500px;width:29px;height:29.800px;background:#0a5a37;border-radius:3px 0 0 3px;"></div><svg style="position:absolute;left:4.7px;top:5.4px;border-radius:2.500px 0 0 2.500px;" width="26.8" height="26.8" viewBox="0 0 26.8 26.8"><g filter="url(#tb)"><rect x="-1" y="-1" width="29" height="29" fill="#8d8880" /><rect x="-1" y="-1" width="29" height="9.5" fill="#c9c5bd" /><path d="M-1 4l28-3v3l-28 4z" fill="#a9a59d"/><rect x="-1" y="9.5" width="29" height="4" fill="#9a958c" /><rect x="-1" y="11" width="10" height="5" fill="#8f957c" /><rect x="-1" y="13.5" width="29" height="10" fill="#766f66" /><rect x="7.5" y="11.5" width="7.5" height="12" fill="#3a2d27" /><rect x="9" y="13" width="1.8" height="2" fill="#b8b2aa" /><rect x="12" y="13" width="1.8" height="2" fill="#b8b2aa" /><rect x="16" y="15" width="11" height="7" fill="#8a847b" /><rect x="-1" y="23.5" width="29" height="4" fill="#9d9890" /></g></svg><span class="t" style="left:3.5px;top:38.92px;font-size:6px;line-height:6px;font-weight:700;color:#063220;letter-spacing:-0.150px;">Growing M</span></div>
<div style="position:absolute;left:197.90px;top:14.2px;width:31.4px;height:50px;background:#12a467;border-radius:4.500px;overflow:hidden;box-shadow:inset 0 0 0 .8px #0e9a5f;"><div style="position:absolute;left:2.700px;top:3.500px;width:29px;height:29.800px;background:#0a5a37;border-radius:3px 0 0 3px;"></div><svg style="position:absolute;left:4.7px;top:5.4px;border-radius:2.500px 0 0 2.500px;" width="26.8" height="26.8" viewBox="0 0 26.8 26.8"><g filter="url(#tb)"><rect x="-1" y="-1" width="29" height="29" fill="#d6d3cc" /><rect x="-1" y="-1" width="10" height="29" fill="#aeb08e" /><ellipse cx="4" cy="16" rx="4" ry="9" fill="#8e9a6a"/><rect x="9" y="-1" width="4" height="29" fill="#e2e0da" /><ellipse cx="15.5" cy="2.3" rx="4.2" ry="2.3" fill="#2c3c5e"/><rect x="11" y="2.5" width="5" height="1.3" fill="#243250" /><ellipse cx="15.2" cy="6.5" rx="3.3" ry="3.8" fill="#b98a70"/><path d="M8 14c2-3.500 5-4.500 8-4.500s6 1.500 7 5l1.500 13h-18z" fill="#cfcfcd"/><path d="M11 12.500l2 1h5l2-1 1.500 14.500h-12z" fill="#1e2b4b"/><rect x="13" y="16.5" width="5.5" height="3" fill="#4a6ab0" /><path d="M6 22l6 1.500-1 3.500-6-1z" fill="#c09a80"/><rect x="8" y="23" width="8" height="3" fill="#e9e7e2" /></g></svg><span class="t" style="left:3.5px;top:38.92px;font-size:6px;line-height:6px;font-weight:700;color:#063220;letter-spacing:-0.150px;">Changing</span></div>
<div style="position:absolute;left:241.50px;top:14.2px;width:31.4px;height:50px;background:#e4e5e3;border-radius:4.500px;overflow:hidden;box-shadow:inset 0 0 0 .8px #d9dad8;"><div style="position:absolute;left:1.5px;top:3px;width:10px;height:10px;background:radial-gradient(circle,#f1f1ee 0%,#e4e5e3 70%);border-radius:5px;"></div><span class="t" style="left:2.5px;top:23.82px;font-size:6px;line-height:6px;font-weight:400;color:#1f2a24;letter-spacing:-0.150px;text-shadow:0 0 .12px #1f2a24;">Strategic</span></div>
<div style="position:absolute;left:441.00px;top:14.2px;width:31.4px;height:50px;background:#b5dcc4;border-radius:4.500px;overflow:hidden;box-shadow:inset 0 0 0 .7px rgba(255,255,255,.55);"><span class="t" style="left:3.3px;top:5.32px;font-size:6px;line-height:6px;font-weight:700;color:#0f2a1d;letter-spacing:-0.150px;">Prime Loc</span><svg style="position:absolute;left:19.5px;top:15.5px;border-radius:2px 0 0 2px;" width="12" height="33" viewBox="0 0 12 33"><g filter="url(#tb)"><rect x="-1" y="-1" width="14" height="35" fill="#f3f5f1" /><rect x="2" y="3" width="3" height="2.5" fill="#e9c86a" /><rect x="0" y="9" width="5" height="1.2" fill="#b9d0e6" /><rect x="3" y="14" width="6" height="1" fill="#c9d9c4" /><rect x="1" y="20" width="4" height="3" fill="#f0d27a" /><rect x="5" y="25" width="5" height="1.2" fill="#b9d0e6" /><ellipse cx="8" cy="4" rx="1.2" ry="1.2" fill="#d9534a"/></g></svg></div>
<div style="position:absolute;left:484.60px;top:14.2px;width:31.4px;height:50px;background:#e4e5e3;border-radius:4.500px;overflow:hidden;box-shadow:inset 0 0 0 .8px #d9dad8;"><div style="position:absolute;left:1.5px;top:3px;width:10px;height:10px;background:radial-gradient(circle,#f1f1ee 0%,#e4e5e3 70%);border-radius:5px;"></div><span class="t" style="left:3.5px;top:23.82px;font-size:6px;line-height:6px;font-weight:400;color:#1f2a24;letter-spacing:-0.150px;text-shadow:0 0 .12px #1f2a24;">Custome</span></div>
<div style="position:absolute;left:528.20px;top:14.2px;width:31.4px;height:50px;background:#12a467;border-radius:4.500px;overflow:hidden;"><span class="t" style="left:3.3px;top:5.32px;font-size:6px;line-height:6px;font-weight:700;color:#04261a;letter-spacing:-0.150px;">Immersive</span><div style="position:absolute;left:21.800px;top:36.800px;width:32px;height:32px;border-radius:50%;background:#86d0aa;"></div></div>
<div style="position:absolute;left:571.80px;top:14.2px;width:31.4px;height:50px;background:#b5dcc4;border-radius:4.500px;overflow:hidden;box-shadow:inset 0 0 0 .7px rgba(255,255,255,.55);"><span class="t" style="left:3.3px;top:5.32px;font-size:6px;line-height:6px;font-weight:700;color:#0f2a1d;letter-spacing:-0.150px;">Quality Pr</span><svg style="position:absolute;left:2.6px;top:15.2px;border-radius:2px 0 0 2px;" width="28.9" height="23.3" viewBox="0 0 28.9 23.3"><g filter="url(#tb)"><rect x="-1" y="-1" width="31" height="25" fill="#3a1612" /><path d="M0 2c3-2 7-1 8 3s0 12-3 16c-2 2-5 2-6 0z" fill="#e3b62c"/><path d="M2 6c2 0 4 3 4 8s-2 7-4 8z" fill="#c98a1a"/><ellipse cx="3" cy="3" rx="3.5" ry="2.5" fill="#b0281e"/><ellipse cx="14" cy="3.5" rx="3" ry="2.5" fill="#e9c23a"/><ellipse cx="20" cy="2.5" rx="2.5" ry="2" fill="#5a8a2a"/><ellipse cx="25" cy="3" rx="3" ry="2.5" fill="#f0d060"/><ellipse cx="24" cy="11" rx="4" ry="4.5" fill="#c9601e"/><ellipse cx="25.5" cy="17.5" rx="3.5" ry="3.5" fill="#8a2a18"/><ellipse cx="17" cy="19.5" rx="4.5" ry="4" fill="#e6d25a"/><ellipse cx="17" cy="19.5" rx="2.5" ry="2.2" fill="#f3ecb0"/><ellipse cx="13" cy="12" rx="4" ry="5" fill="#4a1418"/><ellipse cx="5" cy="20" rx="3" ry="3" fill="#d9a022"/><ellipse cx="10" cy="7" rx="2" ry="2" fill="#d9c43a"/></g></svg><span class="t" style="left:3.4px;top:40.51px;font-size:3.3px;line-height:3.3px;font-weight:400;color:#24402f;letter-spacing:-0.150px;">Fresh Produce</span></div>
<div style="position:absolute;left:615.40px;top:14.2px;width:31.4px;height:50px;background:#0b4a33;border-radius:4.500px;overflow:hidden;"><span class="t" style="left:2.9px;top:5.24px;font-size:6.1px;line-height:6.1px;font-weight:400;color:#fff;letter-spacing:-0.150px;">Progress I</span></div>
<div style="position:absolute;left:659.00px;top:14.2px;width:31.4px;height:50px;background:#b9b4b6;border-radius:4.500px;overflow:hidden;"><svg style="position:absolute;left:0px;top:0px;border-radius:0;" width="31.4" height="50" viewBox="0 0 31.4 50"><g filter="url(#tb)"><rect x="-1" y="-1" width="34" height="52" fill="#c9ccca" /><rect x="-1" y="-1" width="34" height="16" fill="#c8b3b7" /><path d="M-1 4l33 11v4l-33-9z" fill="#4e494b"/><path d="M-1 5.500l14 4.500v2l-14-4z" fill="#8a3a3a"/><path d="M-1 10l33 10v7l-33-9z" fill="#a9a7a4"/><path d="M-1 18l33 9v3l-33-8z" fill="#5e5a58"/><path d="M-1 22l33 8v8l-33-6z" fill="#dcdcd8"/><rect x="11" y="25" width="6" height="5" fill="#d9b08a" /><path d="M-1 31l33 6v3l-33-5z" fill="#8c8f8e"/><path d="M-1 36l33 5v10h-33z" fill="#d3d6d6"/><path d="M3 40l14-2v6l-14 3z" fill="#3c5a9c"/><path d="M-1 45l33-5v3l-33 6z" fill="#a9adb0"/><ellipse cx="6" cy="43" rx="2" ry="2" fill="#e9ecf0"/></g></svg></div>
<div style="position:absolute;left:702.60px;top:14.2px;width:31.4px;height:50px;background:#12a467;border-radius:4.500px;overflow:hidden;"><div style="position:absolute;left:4.3px;top:-5px;width:9.6px;height:9.8px;background:#0b5f3d;border-radius:5px;"></div><svg style="position:absolute;left:2.2px;top:15.5px;border-radius:2.500px 0 0 2.500px;" width="29.3" height="22.6" viewBox="0 0 29.3 22.6"><g filter="url(#tb)"><rect x="-1" y="-1" width="31" height="25" fill="#0c1214" /><path d="M1 2l11-1v9l-8 3-3-1z" fill="#8c918e"/><path d="M2 3l9-1v4l-9 3z" fill="#b9bdba"/><path d="M4 13l9-4v5l-8 4z" fill="#3a4240"/><path d="M19 -1l4 0-2 8-3 1z" fill="#dfe3e2"/><rect x="14" y="8" width="14" height="14" fill="#0a0e10" /><path d="M13 2l4 0v18l-4 2z" fill="#1e2628"/></g></svg><div style="position:absolute;left:18.8px;top:38px;width:13px;height:12.5px;background:#0b6b45;border-radius:0px;"></div></div>
<div style="position:absolute;left:746.20px;top:14.2px;width:31.4px;height:50px;background:#e4e5e3;border-radius:4.500px;overflow:hidden;box-shadow:inset 0 0 0 .8px #d9dad8;"><div style="position:absolute;left:1.5px;top:3px;width:10px;height:10px;background:radial-gradient(circle,#f1f1ee 0%,#e4e5e3 70%);border-radius:5px;"></div><span class="t" style="left:3.3px;top:23.82px;font-size:6px;line-height:6px;font-weight:400;color:#1f2a24;letter-spacing:-0.150px;text-shadow:0 0 .12px #1f2a24;">Confidenc</span></div>
<div style="position:absolute;left:789.80px;top:14.2px;width:31.4px;height:50px;background:#12a467;border-radius:4.500px;overflow:hidden;"><svg style="position:absolute;left:2.6px;top:13px;border-radius:3px;" width="24.5" height="24.8" viewBox="0 0 24.5 24.8"><g filter="url(#tb)"><rect x="-1" y="-1" width="27" height="27" fill="#2a331f" /><rect x="-1" y="-1" width="27" height="6" fill="#bccbe2" /><rect x="-1" y="2" width="6" height="5" fill="#d9c4cf" /><rect x="4" y="2.5" width="4.5" height="9" fill="#9a6a72" /><rect x="9" y="1.5" width="3.5" height="11" fill="#b07a80" /><rect x="13" y="3" width="3" height="12" fill="#8a5a62" /><rect x="16.5" y="2" width="3.5" height="12" fill="#a8727a" /><rect x="20.5" y="4" width="3" height="10" fill="#6a4a50" /><ellipse cx="6" cy="13" rx="7" ry="6" fill="#4a5630"/><ellipse cx="4" cy="20" rx="6" ry="6" fill="#566338"/><ellipse cx="13" cy="18" rx="5" ry="6" fill="#39462a"/><rect x="15" y="11" width="10" height="15" fill="#1c2418" /><ellipse cx="9" cy="23" rx="6" ry="3" fill="#2e3a22"/></g></svg></div>
<div style="position:absolute;left:833.40px;top:14.2px;width:31.4px;height:50px;background:#b5dcc4;border-radius:4.500px;overflow:hidden;box-shadow:inset 0 0 0 .7px rgba(255,255,255,.55);"><svg style="position:absolute;left:2.6px;top:3.3px;border-radius:2px 0 0 2px;" width="28.9" height="22.7" viewBox="0 0 28.9 22.7"><g filter="url(#tb)"><rect x="-1" y="-1" width="31" height="25" fill="#cdd7d8" /><rect x="-1" y="-1" width="9" height="25" fill="#b4c2c6" /><rect x="3" y="0" width="1" height="23" fill="#e2e8e8" /><rect x="6" y="0" width="1" height="23" fill="#dfe6e6" /><rect x="20" y="-1" width="11" height="25" fill="#eef0ee" /><rect x="0" y="17" width="4" height="1.5" fill="#4a5558" /><ellipse cx="18.5" cy="4.5" rx="3.6" ry="4.3" fill="#c59a58"/><ellipse cx="18.7" cy="5.8" rx="2.3" ry="3" fill="#e2b494"/><path d="M10.500 23c0-7 2-12 5-13l3 1.500 3.500-1.500c3 1 4.500 6 4.500 13z" fill="#d5a32a"/><path d="M17 10.500l1.700 4 1.800-4z" fill="#f0e8dc"/><rect x="23" y="11.5" width="5.5" height="7" fill="#f4f4f2" /><ellipse cx="17.5" cy="19.5" rx="2.5" ry="1.5" fill="#d9a888"/></g></svg><span class="t" style="left:3.5px;top:33.42px;font-size:6px;line-height:6px;font-weight:700;color:#0f2a1d;letter-spacing:-0.150px;">Building o</span><span class="t" style="left:3.5px;top:40.72px;font-size:6px;line-height:6px;font-weight:700;color:#0f2a1d;letter-spacing:-0.150px;">Success</span></div>
<div style="position:absolute;left:877.00px;top:14.2px;width:31.4px;height:50px;background:#f2f0e8;border-radius:4.500px;overflow:hidden;box-shadow:inset 0 0 0 .8px #d9dad8;"><span class="t" style="left:3.3px;top:41.01px;font-size:5.9px;line-height:5.9px;font-weight:400;color:#1f2a24;letter-spacing:-0.150px;text-shadow:0 0 .12px #1f2a24;">Conclusio</span></div>
<div style="position:absolute;left:920.60px;top:14.2px;width:31.4px;height:50px;background:#b5dcc4;border-radius:4.500px;overflow:hidden;box-shadow:inset 0 0 0 .7px rgba(255,255,255,.55);"><span class="t" style="left:3.3px;top:5.32px;font-size:6px;line-height:6px;font-weight:700;color:#0f2a1d;letter-spacing:-0.150px;">Team A</span><div style="position:absolute;left:19px;top:16.2px;width:14px;height:33px;background:linear-gradient(90deg,#3a3d3c,#5a5d5c 40%,#8c8f8d);border-radius:1.5px;"></div></div>
<div style="position:absolute;left:8.35px;top:26.200px;width:16.700px;height:24.800px;border-radius:8.350px;background:#0b5aa2;box-shadow:0 0 1.500px rgba(11,90,162,.5);"><div style="position:absolute;left:3.500px;top:7.400px;width:9.700px;height:10px;border-radius:1.600px;background:#fff;"><div style="position:absolute;left:3.600px;top:1.200px;width:4.900px;height:7.600px;background:#2f77bf;border-radius:.5px;"></div><div style="position:absolute;left:2.300px;top:1.200px;width:.8px;height:7.600px;background:repeating-linear-gradient(#0b5aa2 0 1px,#fff 1px 2px);"></div></div></div>
<div style="position:absolute;left:51.95px;top:26.200px;width:16.700px;height:24.800px;border-radius:8.350px;background:#0b5aa2;box-shadow:0 0 1.500px rgba(11,90,162,.5);"><div style="position:absolute;left:3.500px;top:7.400px;width:9.700px;height:10px;border-radius:1.600px;background:#fff;"><div style="position:absolute;left:3.600px;top:1.200px;width:4.900px;height:7.600px;background:#2f77bf;border-radius:.5px;"></div><div style="position:absolute;left:2.300px;top:1.200px;width:.8px;height:7.600px;background:repeating-linear-gradient(#0b5aa2 0 1px,#fff 1px 2px);"></div></div></div>
<div style="position:absolute;left:95.55px;top:26.200px;width:16.700px;height:24.800px;border-radius:8.350px;background:#0b5aa2;box-shadow:0 0 1.500px rgba(11,90,162,.5);"><div style="position:absolute;left:3.500px;top:7.400px;width:9.700px;height:10px;border-radius:1.600px;background:#fff;"><div style="position:absolute;left:3.600px;top:1.200px;width:4.900px;height:7.600px;background:#2f77bf;border-radius:.5px;"></div><div style="position:absolute;left:2.300px;top:1.200px;width:.8px;height:7.600px;background:repeating-linear-gradient(#0b5aa2 0 1px,#fff 1px 2px);"></div></div></div>
<div style="position:absolute;left:139.15px;top:26.200px;width:16.700px;height:24.800px;border-radius:8.350px;background:#0b5aa2;box-shadow:0 0 1.500px rgba(11,90,162,.5);"><div style="position:absolute;left:3.500px;top:7.400px;width:9.700px;height:10px;border-radius:1.600px;background:#fff;"><div style="position:absolute;left:3.600px;top:1.200px;width:4.900px;height:7.600px;background:#2f77bf;border-radius:.5px;"></div><div style="position:absolute;left:2.300px;top:1.200px;width:.8px;height:7.600px;background:repeating-linear-gradient(#0b5aa2 0 1px,#fff 1px 2px);"></div></div></div>
<div style="position:absolute;left:182.75px;top:26.200px;width:16.700px;height:24.800px;border-radius:8.350px;background:#0b5aa2;box-shadow:0 0 1.500px rgba(11,90,162,.5);"><div style="position:absolute;left:3.500px;top:7.400px;width:9.700px;height:10px;border-radius:1.600px;background:#fff;"><div style="position:absolute;left:3.600px;top:1.200px;width:4.900px;height:7.600px;background:#2f77bf;border-radius:.5px;"></div><div style="position:absolute;left:2.300px;top:1.200px;width:.8px;height:7.600px;background:repeating-linear-gradient(#0b5aa2 0 1px,#fff 1px 2px);"></div></div></div>
<div style="position:absolute;left:226.35px;top:26.200px;width:16.700px;height:24.800px;border-radius:8.350px;background:#0b5aa2;box-shadow:0 0 1.500px rgba(11,90,162,.5);"><div style="position:absolute;left:3.500px;top:7.400px;width:9.700px;height:10px;border-radius:1.600px;background:#fff;"><div style="position:absolute;left:3.600px;top:1.200px;width:4.900px;height:7.600px;background:#2f77bf;border-radius:.5px;"></div><div style="position:absolute;left:2.300px;top:1.200px;width:.8px;height:7.600px;background:repeating-linear-gradient(#0b5aa2 0 1px,#fff 1px 2px);"></div></div></div>
<div style="position:absolute;left:269.95px;top:26.200px;width:16.700px;height:24.800px;border-radius:8.350px;background:#0b5aa2;box-shadow:0 0 1.500px rgba(11,90,162,.5);"><div style="position:absolute;left:3.500px;top:7.400px;width:9.700px;height:10px;border-radius:1.600px;background:#fff;"><div style="position:absolute;left:3.600px;top:1.200px;width:4.900px;height:7.600px;background:#2f77bf;border-radius:.5px;"></div><div style="position:absolute;left:2.300px;top:1.200px;width:.8px;height:7.600px;background:repeating-linear-gradient(#0b5aa2 0 1px,#fff 1px 2px);"></div></div></div>
<div style="position:absolute;left:284.700px;top:14.2px;width:144.800px;height:50.200px;border:1.400px solid #1c5fc6;border-radius:5.500px;background:#fff;"><div style="position:absolute;left:.9px;top:.9px;right:.9px;bottom:.9px;background:#dfe0de;border-radius:3.800px;"></div></div>
<div style="position:absolute;left:426.45px;top:26.200px;width:16.700px;height:24.800px;border-radius:8.350px;background:#0b5aa2;box-shadow:0 0 1.500px rgba(11,90,162,.5);"><div style="position:absolute;left:3.500px;top:7.400px;width:9.700px;height:10px;border-radius:1.600px;background:#fff;"><div style="position:absolute;left:3.600px;top:1.200px;width:4.900px;height:7.600px;background:#2f77bf;border-radius:.5px;"></div><div style="position:absolute;left:2.300px;top:1.200px;width:.8px;height:7.600px;background:repeating-linear-gradient(#0b5aa2 0 1px,#fff 1px 2px);"></div></div></div>
<div style="position:absolute;left:470.05px;top:26.200px;width:16.700px;height:24.800px;border-radius:8.350px;background:#0b5aa2;box-shadow:0 0 1.500px rgba(11,90,162,.5);"><div style="position:absolute;left:3.500px;top:7.400px;width:9.700px;height:10px;border-radius:1.600px;background:#fff;"><div style="position:absolute;left:3.600px;top:1.200px;width:4.900px;height:7.600px;background:#2f77bf;border-radius:.5px;"></div><div style="position:absolute;left:2.300px;top:1.200px;width:.8px;height:7.600px;background:repeating-linear-gradient(#0b5aa2 0 1px,#fff 1px 2px);"></div></div></div>
<div style="position:absolute;left:513.65px;top:26.200px;width:16.700px;height:24.800px;border-radius:8.350px;background:#0b5aa2;box-shadow:0 0 1.500px rgba(11,90,162,.5);"><div style="position:absolute;left:3.500px;top:7.400px;width:9.700px;height:10px;border-radius:1.600px;background:#fff;"><div style="position:absolute;left:3.600px;top:1.200px;width:4.900px;height:7.600px;background:#2f77bf;border-radius:.5px;"></div><div style="position:absolute;left:2.300px;top:1.200px;width:.8px;height:7.600px;background:repeating-linear-gradient(#0b5aa2 0 1px,#fff 1px 2px);"></div></div></div>
<div style="position:absolute;left:557.25px;top:26.200px;width:16.700px;height:24.800px;border-radius:8.350px;background:#0b5aa2;box-shadow:0 0 1.500px rgba(11,90,162,.5);"><div style="position:absolute;left:3.500px;top:7.400px;width:9.700px;height:10px;border-radius:1.600px;background:#fff;"><div style="position:absolute;left:3.600px;top:1.200px;width:4.900px;height:7.600px;background:#2f77bf;border-radius:.5px;"></div><div style="position:absolute;left:2.300px;top:1.200px;width:.8px;height:7.600px;background:repeating-linear-gradient(#0b5aa2 0 1px,#fff 1px 2px);"></div></div></div>
<div style="position:absolute;left:600.85px;top:26.200px;width:16.700px;height:24.800px;border-radius:8.350px;background:#0b5aa2;box-shadow:0 0 1.500px rgba(11,90,162,.5);"><div style="position:absolute;left:3.500px;top:7.400px;width:9.700px;height:10px;border-radius:1.600px;background:#fff;"><div style="position:absolute;left:3.600px;top:1.200px;width:4.900px;height:7.600px;background:#2f77bf;border-radius:.5px;"></div><div style="position:absolute;left:2.300px;top:1.200px;width:.8px;height:7.600px;background:repeating-linear-gradient(#0b5aa2 0 1px,#fff 1px 2px);"></div></div></div>
<div style="position:absolute;left:644.45px;top:26.200px;width:16.700px;height:24.800px;border-radius:8.350px;background:#0b5aa2;box-shadow:0 0 1.500px rgba(11,90,162,.5);"><div style="position:absolute;left:3.500px;top:7.400px;width:9.700px;height:10px;border-radius:1.600px;background:#fff;"><div style="position:absolute;left:3.600px;top:1.200px;width:4.900px;height:7.600px;background:#2f77bf;border-radius:.5px;"></div><div style="position:absolute;left:2.300px;top:1.200px;width:.8px;height:7.600px;background:repeating-linear-gradient(#0b5aa2 0 1px,#fff 1px 2px);"></div></div></div>
<div style="position:absolute;left:688.05px;top:26.200px;width:16.700px;height:24.800px;border-radius:8.350px;background:#0b5aa2;box-shadow:0 0 1.500px rgba(11,90,162,.5);"><div style="position:absolute;left:3.500px;top:7.400px;width:9.700px;height:10px;border-radius:1.600px;background:#fff;"><div style="position:absolute;left:3.600px;top:1.200px;width:4.900px;height:7.600px;background:#2f77bf;border-radius:.5px;"></div><div style="position:absolute;left:2.300px;top:1.200px;width:.8px;height:7.600px;background:repeating-linear-gradient(#0b5aa2 0 1px,#fff 1px 2px);"></div></div></div>
<div style="position:absolute;left:731.65px;top:26.200px;width:16.700px;height:24.800px;border-radius:8.350px;background:#0b5aa2;box-shadow:0 0 1.500px rgba(11,90,162,.5);"><div style="position:absolute;left:3.500px;top:7.400px;width:9.700px;height:10px;border-radius:1.600px;background:#fff;"><div style="position:absolute;left:3.600px;top:1.200px;width:4.900px;height:7.600px;background:#2f77bf;border-radius:.5px;"></div><div style="position:absolute;left:2.300px;top:1.200px;width:.8px;height:7.600px;background:repeating-linear-gradient(#0b5aa2 0 1px,#fff 1px 2px);"></div></div></div>
<div style="position:absolute;left:775.25px;top:26.200px;width:16.700px;height:24.800px;border-radius:8.350px;background:#0b5aa2;box-shadow:0 0 1.500px rgba(11,90,162,.5);"><div style="position:absolute;left:3.500px;top:7.400px;width:9.700px;height:10px;border-radius:1.600px;background:#fff;"><div style="position:absolute;left:3.600px;top:1.200px;width:4.900px;height:7.600px;background:#2f77bf;border-radius:.5px;"></div><div style="position:absolute;left:2.300px;top:1.200px;width:.8px;height:7.600px;background:repeating-linear-gradient(#0b5aa2 0 1px,#fff 1px 2px);"></div></div></div>
<div style="position:absolute;left:818.85px;top:26.200px;width:16.700px;height:24.800px;border-radius:8.350px;background:#0b5aa2;box-shadow:0 0 1.500px rgba(11,90,162,.5);"><div style="position:absolute;left:3.500px;top:7.400px;width:9.700px;height:10px;border-radius:1.600px;background:#fff;"><div style="position:absolute;left:3.600px;top:1.200px;width:4.900px;height:7.600px;background:#2f77bf;border-radius:.5px;"></div><div style="position:absolute;left:2.300px;top:1.200px;width:.8px;height:7.600px;background:repeating-linear-gradient(#0b5aa2 0 1px,#fff 1px 2px);"></div></div></div>
<div style="position:absolute;left:862.45px;top:26.200px;width:16.700px;height:24.800px;border-radius:8.350px;background:#0b5aa2;box-shadow:0 0 1.500px rgba(11,90,162,.5);"><div style="position:absolute;left:3.500px;top:7.400px;width:9.700px;height:10px;border-radius:1.600px;background:#fff;"><div style="position:absolute;left:3.600px;top:1.200px;width:4.900px;height:7.600px;background:#2f77bf;border-radius:.5px;"></div><div style="position:absolute;left:2.300px;top:1.200px;width:.8px;height:7.600px;background:repeating-linear-gradient(#0b5aa2 0 1px,#fff 1px 2px);"></div></div></div>
<div style="position:absolute;left:900.600px;top:25px;width:27.800px;height:27.800px;border-radius:7.500px;background:#a8c7fa;box-shadow:0 1px 3px rgba(60,64,67,.35);"></div>
<div style="position:absolute;left:910.600px;top:38.400px;width:8.600px;height:1px;background:#16408c;"></div><div style="position:absolute;left:914.450px;top:34.550px;width:1px;height:8.600px;background:#16408c;"></div>
</div>
<svg style="position:absolute;left:280.300px;top:460px" width="9.800" height="6.800" viewBox="0 0 9.800 6.800"><path d="M.8 0h8.200a.8.800 0 0 1 .6 1.300L5.500 6.400a.8.800 0 0 1-1.200 0L.2 1.300A.8.800 0 0 1 .8 0z" fill="#0b57d0"/></svg>
<div style="position:absolute;left:284.60px;top:469.00px;width:1.30px;height:54.00px;background:#1c5fc6;"></div>
</div></body></html>
